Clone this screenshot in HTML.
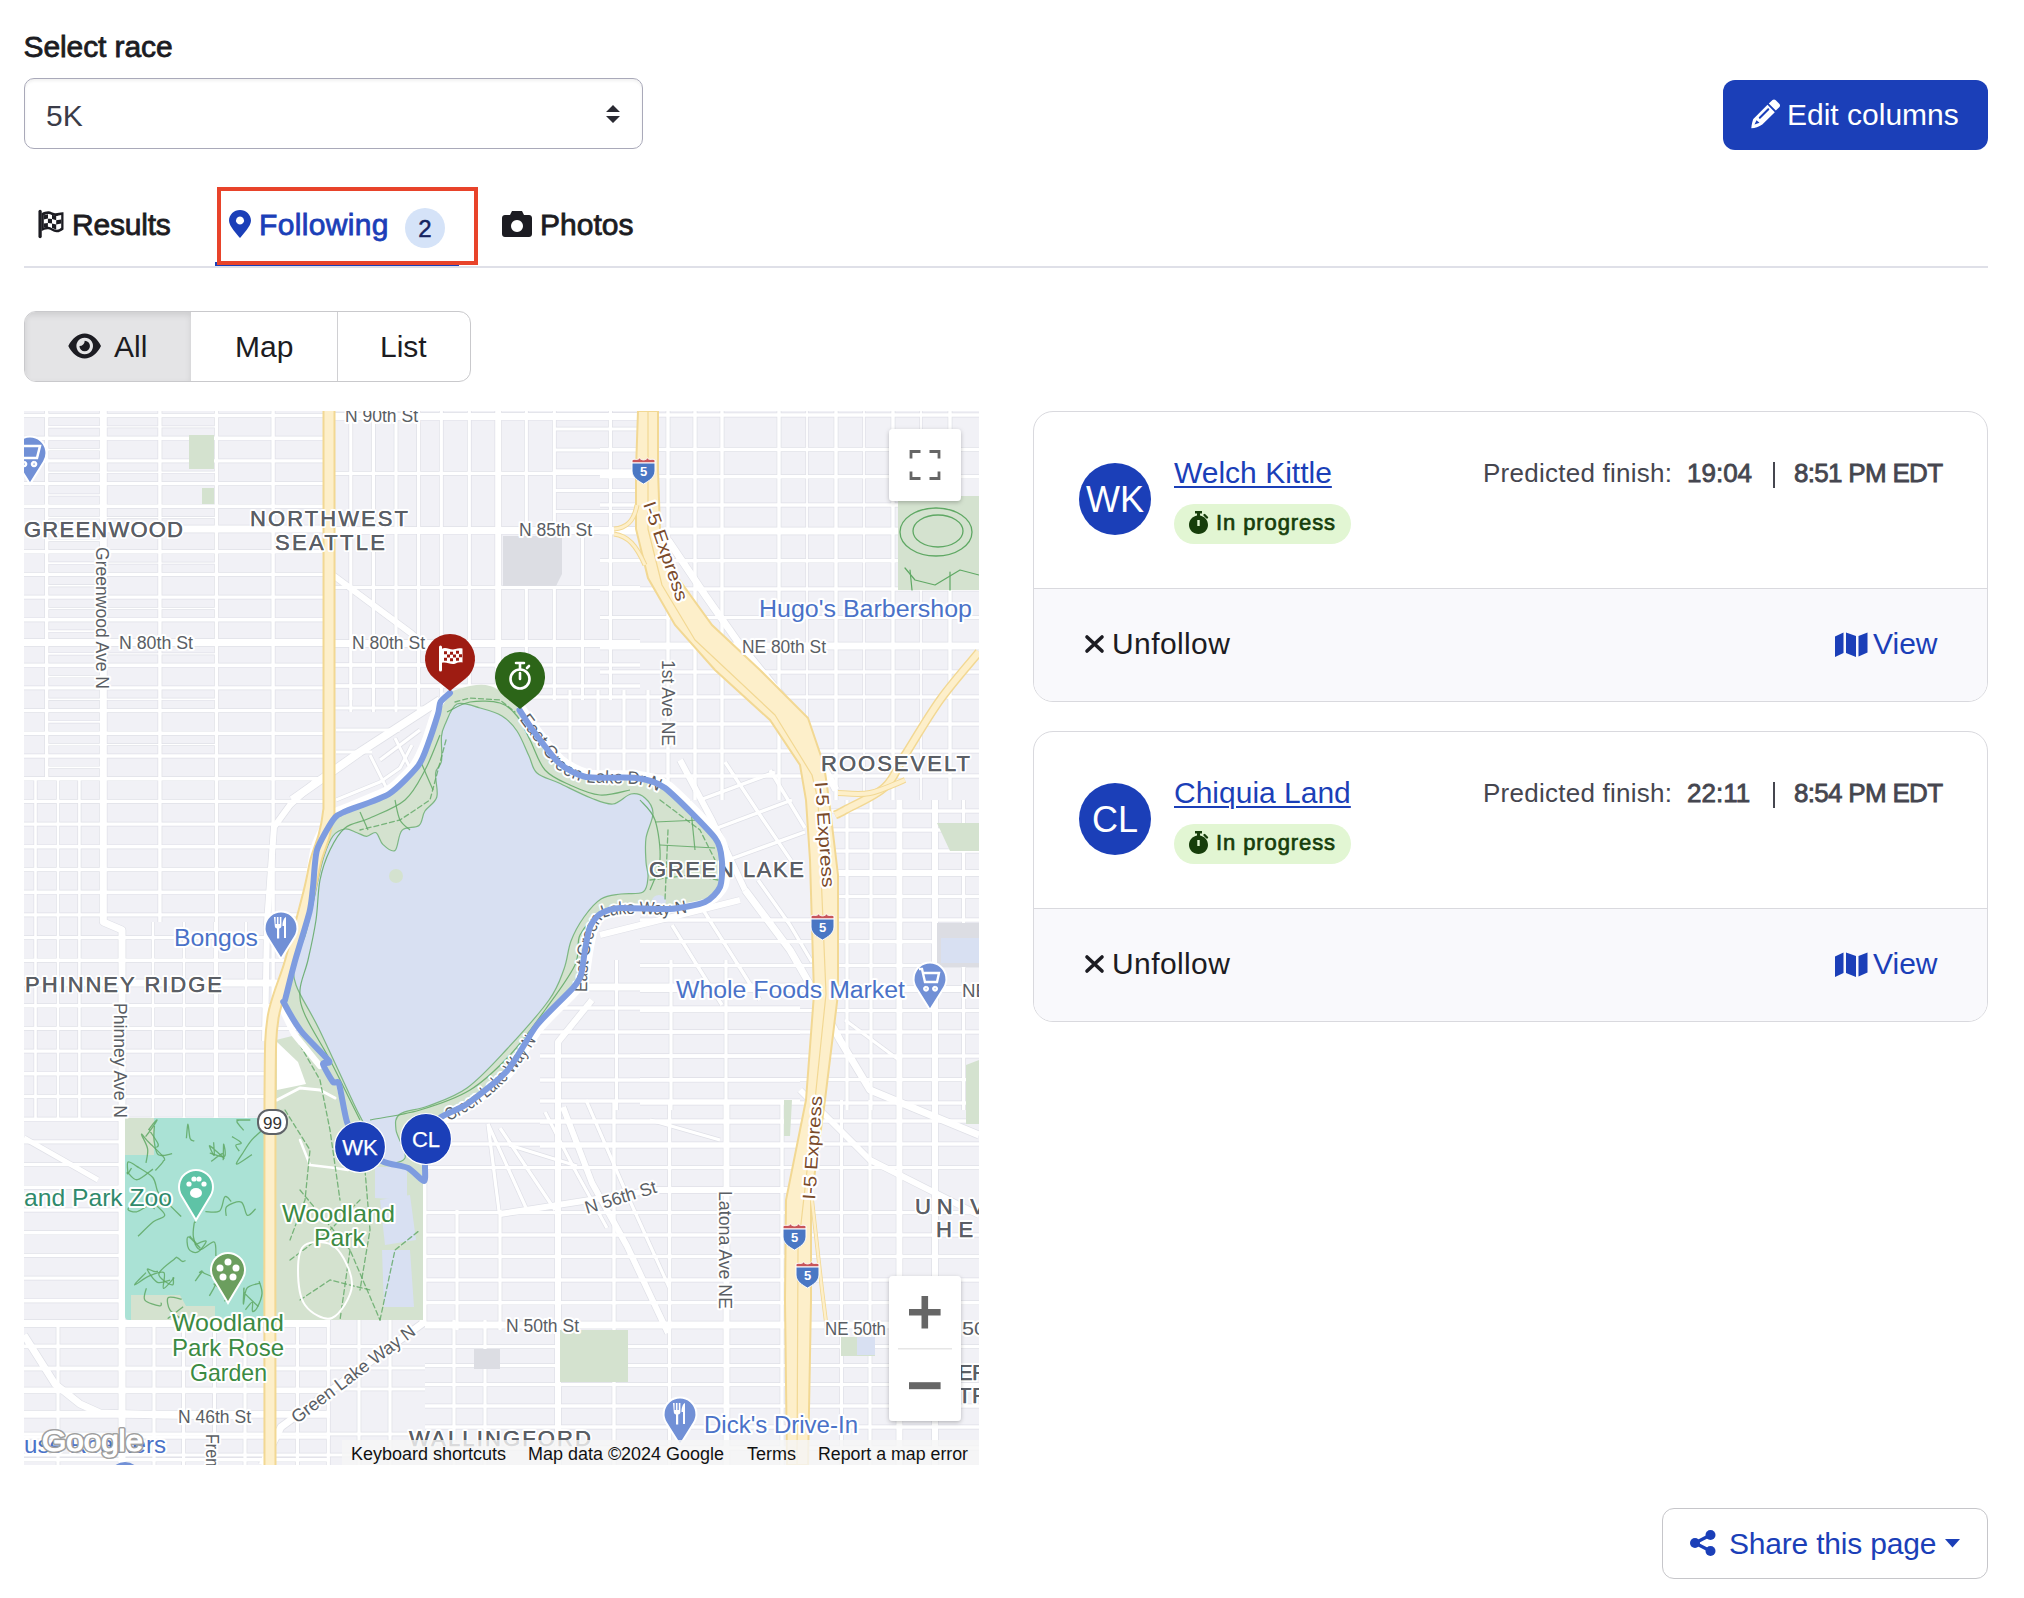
<!DOCTYPE html>
<html><head><meta charset="utf-8">
<style>
html,body{margin:0;padding:0;background:#fff;width:2024px;height:1598px;overflow:hidden;position:relative;font-family:"Liberation Sans",sans-serif;color:#212529}
.a{position:absolute;white-space:nowrap;line-height:1}
.b{font-weight:400;-webkit-text-stroke:0.8px currentColor}
.blue{color:#1b3fb8}
svg.i{position:absolute;display:block;overflow:visible}
</style></head><body>

<!-- Select race -->
<div class="a b" style="left:23.5px;top:31.6px;font-size:30px;letter-spacing:-0.1px;color:#1c1c22">Select race</div>
<div class="a" style="left:24px;top:78px;width:617px;height:69px;border:1.5px solid #a9a9b9;border-radius:10px;box-shadow:inset 0 2px 3px rgba(0,0,0,0.06)"></div>
<div class="a" style="left:46px;top:101.3px;font-size:30px;color:#3b3c48">5K</div>
<svg class="i" style="left:606px;top:105px" width="14" height="18" viewBox="0 0 14 18"><path d="M7 0 L14 7 L0 7 Z M0 11 L14 11 L7 18 Z" fill="#2a2a32"/></svg>

<!-- Edit columns -->
<div class="a" style="left:1723px;top:80px;width:265px;height:70px;background:#1b3fb8;border-radius:12px"></div>
<svg class="i" style="left:0;top:0" width="2024" height="200" viewBox="0 0 2024 200"><path d="M1767.5,104.8 L1774.8,112.3 L1762.3,124.5 C1759,127 1755,128 1751.3,128.3 C1751.6,124.5 1752.5,121 1753.3,119 Z M1768.8,103.5 L1772.5,100 C1773.5,99.3 1774.5,99.3 1775.5,100 L1779.5,104 C1780.2,105 1780.2,106 1779.5,107 L1775.8,110.5 Z" fill="#fff"/><path d="M1768.3,109.3 L1759.8,117.8" stroke="#1b3fb8" stroke-width="2" stroke-linecap="round"/><path d="M1756.5,120.3 L1759.5,122.8 L1754.5,124.5 Z" fill="#1b3fb8"/></svg>
<div class="a" style="left:1787px;top:100.1px;font-size:30px;color:#fff">Edit columns</div>

<!-- Tabs -->
<svg class="i" style="left:0;top:0" width="2024" height="300" viewBox="0 0 2024 300">
 <path d="M40.1,211.5 V236.5" stroke="#1c1c22" stroke-width="3.3" stroke-linecap="round"/>
 <path d="M41.5,213.2 C44,212 46,211.3 48.3,211.3 C51,211.3 52.5,213 55,213.2 C58,213.4 60,212 63.5,212.3 V229.5 C60.5,231.5 59,232.5 56.5,232.3 C53,232 51,229.5 48.3,229.3 C45.5,229.1 43.5,230.3 41.5,231 Z" fill="#1c1c22"/>
 <path d="M43.8,215.3 C45.5,214.5 47,214 48.3,214 C51,214 52.5,215.7 55,216 C57.5,216.2 59.5,215.3 61.2,215 V227.8 C59.7,229.2 58.3,229.8 56.5,229.7 C53,229.5 51,227 48.3,226.8 C46.5,226.6 45,227.2 43.8,227.8 Z" fill="#fff"/>
 <path d="M43.8,215.3 L48,214.3 L48,218.6 L43.8,219.6 Z M52,214.8 L56.2,216.1 L56.2,220.3 L52,219.1 Z M47.9,218.6 L52,219.1 L52,223.4 L47.9,222.9 Z M56.2,220.3 L61.2,219.4 L61.2,223.6 L56.2,224.5 Z M43.8,223.6 L47.9,222.9 L47.9,227 L43.8,227.8 Z M52,223.4 L56.2,224.5 L56.2,229.5 L52,228 Z" fill="#1c1c22"/>
</svg>
<div class="a b" style="left:72px;top:210px;font-size:30px;letter-spacing:-0.2px;color:#1c1c22">Results</div>

<svg class="i" style="left:229px;top:210px" width="22" height="28" viewBox="0 0 22 28"><path d="M11 0 C17 0,22 4.7,22 10.7 C22 16,14 24,11 28 C8 24,0 16,0 10.7 C0 4.7,5 0,11 0 Z M11 6.5 A4 4 0 1 0 11.01 6.5 Z" fill="#1b3fb8" fill-rule="evenodd"/></svg>
<div class="a b blue" style="left:259px;top:210px;font-size:30px;letter-spacing:0.35px">Following</div>
<div class="a" style="left:405px;top:208px;width:40px;height:40px;border-radius:50%;background:#d5e3f8"></div>
<div class="a" style="left:405px;top:214px;width:40px;text-align:center;font-size:24px;line-height:30px;color:#16235e;-webkit-text-stroke:0.5px #16235e">2</div>

<svg class="i" style="left:502px;top:211px" width="30" height="26" viewBox="0 0 30 26"><path d="M10 0 H20 L22 4 H27 C28.7 4,30 5.3,30 7 V23 C30 24.7,28.7 26,27 26 H3 C1.3 26,0 24.7,0 23 V7 C0 5.3,1.3 4,3 4 H8 Z M15 9 A6 6 0 1 0 15.01 9 Z" fill="#1c1c22" fill-rule="evenodd"/></svg>
<div class="a b" style="left:540px;top:210px;font-size:30px;letter-spacing:0px;color:#1c1c22">Photos</div>

<div class="a" style="left:24px;top:266px;width:1964px;height:2px;background:#dfe0e8"></div>
<div class="a" style="left:215px;top:262px;width:244px;height:4px;background:#1b3fb8"></div>
<div class="a" style="left:217px;top:187px;width:253px;height:70px;border:4px solid #e8432a"></div>

<!-- Button group -->
<div class="a" style="left:24px;top:311px;width:444.5px;height:68.5px;border:1.3px solid #c9c9cc;border-radius:12px;overflow:hidden">
  <div class="a" style="left:0;top:0;width:166px;height:68.5px;background:#e4e4e6;box-shadow:inset 0 3px 6px rgba(0,0,0,0.10)"></div>
  <div class="a" style="left:311.5px;top:0;width:1.3px;height:68.5px;background:#d0d0d3"></div>
</div>
<svg class="i" style="left:0;top:0" width="300" height="400" viewBox="0 0 300 400"><path d="M68.3,346 C72,338.5 78,333.5 84.7,333.5 C91.4,333.5 97.4,338.5 101,346 C97.4,353.5 91.4,358.5 84.7,358.5 C78,358.5 72,353.5 68.3,346 Z M84.7,337.7 A8.3,8.3 0 1 0 84.71,337.7 Z" fill="#1c1c22" fill-rule="evenodd"/><path d="M84.7,340.75 A5.25,5.25 0 1 1 79.45,346 A5.2,5.2 0 0 0 84.7,340.75 Z" fill="#1c1c22"/></svg>
<div class="a" style="left:114px;top:331.6px;font-size:30px;color:#1c1c22">All</div>
<div class="a" style="left:235px;top:331.6px;font-size:30px;color:#1c1c22">Map</div>
<div class="a" style="left:380px;top:331.6px;font-size:30px;color:#1c1c22">List</div>

<!-- MAP -->
<div id="map" class="a" style="left:24px;top:411px;width:955px;height:1054px;background:#eeeff3;overflow:hidden">
<svg width="955" height="1054" viewBox="24 411 955 1054" style="position:absolute;left:0;top:0;display:block"><rect x="24" y="411" width="955" height="1054" fill="#f1f1f6"/>
<g fill="none" stroke-linecap="butt" stroke-linejoin="round">
<polyline points="24.0,415.5 330.0,415.5" stroke="#dfe0e7" stroke-width="4.8"/>
<polyline points="24.0,438.2 330.0,438.2" stroke="#dfe0e7" stroke-width="4.8"/>
<polyline points="24.0,460.9 330.0,460.9" stroke="#dfe0e7" stroke-width="4.8"/>
<polyline points="24.0,483.6 330.0,483.6" stroke="#dfe0e7" stroke-width="4.8"/>
<polyline points="24.0,506.3 330.0,506.3" stroke="#dfe0e7" stroke-width="4.8"/>
<polyline points="24.0,529.0 330.0,529.0" stroke="#dfe0e7" stroke-width="8.4"/>
<polyline points="24.0,551.7 330.0,551.7" stroke="#dfe0e7" stroke-width="4.8"/>
<polyline points="24.0,574.4 330.0,574.4" stroke="#dfe0e7" stroke-width="4.8"/>
<polyline points="24.0,597.1 330.0,597.1" stroke="#dfe0e7" stroke-width="4.8"/>
<polyline points="24.0,619.8 330.0,619.8" stroke="#dfe0e7" stroke-width="4.8"/>
<polyline points="24.0,642.5 330.0,642.5" stroke="#dfe0e7" stroke-width="8.4"/>
<polyline points="24.0,665.2 330.0,665.2" stroke="#dfe0e7" stroke-width="4.8"/>
<polyline points="24.0,687.9 330.0,687.9" stroke="#dfe0e7" stroke-width="4.8"/>
<polyline points="24.0,710.6 330.0,710.6" stroke="#dfe0e7" stroke-width="4.8"/>
<polyline points="24.0,733.3 330.0,733.3" stroke="#dfe0e7" stroke-width="4.8"/>
<polyline points="24.0,756.0 330.0,756.0" stroke="#dfe0e7" stroke-width="4.8"/>
<polyline points="24.0,778.7 330.0,778.7" stroke="#dfe0e7" stroke-width="4.8"/>
<polyline points="24.0,801.4 330.0,801.4" stroke="#dfe0e7" stroke-width="4.8"/>
<polyline points="24.0,824.1 330.0,824.1" stroke="#dfe0e7" stroke-width="4.8"/>
<polyline points="24.0,846.8 330.0,846.8" stroke="#dfe0e7" stroke-width="4.8"/>
<polyline points="24.0,869.5 330.0,869.5" stroke="#dfe0e7" stroke-width="4.8"/>
<polyline points="24.0,892.2 330.0,892.2" stroke="#dfe0e7" stroke-width="4.8"/>
<polyline points="24.0,914.9 330.0,914.9" stroke="#dfe0e7" stroke-width="4.8"/>
<polyline points="24.0,937.6 330.0,937.6" stroke="#dfe0e7" stroke-width="4.8"/>
<polyline points="24.0,960.3 330.0,960.3" stroke="#dfe0e7" stroke-width="4.8"/>
<polyline points="24.0,983.0 330.0,983.0" stroke="#dfe0e7" stroke-width="8.4"/>
<polyline points="24.0,1005.7 330.0,1005.7" stroke="#dfe0e7" stroke-width="4.8"/>
<polyline points="24.0,1028.4 330.0,1028.4" stroke="#dfe0e7" stroke-width="4.8"/>
<polyline points="24.0,1051.1 330.0,1051.1" stroke="#dfe0e7" stroke-width="4.8"/>
<polyline points="24.0,1073.8 330.0,1073.8" stroke="#dfe0e7" stroke-width="4.8"/>
<polyline points="24.0,1096.5 330.0,1096.5" stroke="#dfe0e7" stroke-width="4.8"/>
<polyline points="24.0,1119.2 330.0,1119.2" stroke="#dfe0e7" stroke-width="4.8"/>
<polyline points="24.0,1141.9 330.0,1141.9" stroke="#dfe0e7" stroke-width="4.8"/>
<polyline points="24.0,1164.6 330.0,1164.6" stroke="#dfe0e7" stroke-width="4.8"/>
<polyline points="24.0,1187.3 330.0,1187.3" stroke="#dfe0e7" stroke-width="4.8"/>
<polyline points="24.0,1210.0 330.0,1210.0" stroke="#dfe0e7" stroke-width="4.8"/>
<polyline points="24.0,1232.7 330.0,1232.7" stroke="#dfe0e7" stroke-width="4.8"/>
<polyline points="24.0,1255.4 330.0,1255.4" stroke="#dfe0e7" stroke-width="4.8"/>
<polyline points="24.0,1278.1 330.0,1278.1" stroke="#dfe0e7" stroke-width="4.8"/>
<polyline points="24.0,1300.8 330.0,1300.8" stroke="#dfe0e7" stroke-width="4.8"/>
<polyline points="24.0,1323.5 330.0,1323.5" stroke="#dfe0e7" stroke-width="8.4"/>
<polyline points="24.0,1346.2 330.0,1346.2" stroke="#dfe0e7" stroke-width="4.8"/>
<polyline points="24.0,1368.9 330.0,1368.9" stroke="#dfe0e7" stroke-width="4.8"/>
<polyline points="24.0,1391.6 330.0,1391.6" stroke="#dfe0e7" stroke-width="4.8"/>
<polyline points="24.0,1414.3 330.0,1414.3" stroke="#dfe0e7" stroke-width="8.4"/>
<polyline points="24.0,1437.0 330.0,1437.0" stroke="#dfe0e7" stroke-width="4.8"/>
<polyline points="24.0,1459.7 330.0,1459.7" stroke="#dfe0e7" stroke-width="4.8"/>
<polyline points="46.7,411.0 46.7,780.0" stroke="#dfe0e7" stroke-width="4.8"/>
<polyline points="159.9,411.0 159.9,922.0" stroke="#dfe0e7" stroke-width="4.8"/>
<polyline points="216.5,411.0 216.5,1118.0" stroke="#dfe0e7" stroke-width="4.8"/>
<polyline points="273.1,411.0 273.1,1118.0" stroke="#dfe0e7" stroke-width="4.8"/>
<polyline points="103.3,411.0 103.3,922.0 122.0,930.0 122.0,1465.0" stroke="#dfe0e7" stroke-width="8.4"/>
<polyline points="35.5,780.0 35.5,1118.0" stroke="#dfe0e7" stroke-width="4.0"/>
<polyline points="58.0,780.0 58.0,1118.0" stroke="#dfe0e7" stroke-width="4.0"/>
<polyline points="79.4,780.0 79.4,1118.0" stroke="#dfe0e7" stroke-width="4.0"/>
<polyline points="153.0,922.0 153.0,1118.0" stroke="#dfe0e7" stroke-width="4.0"/>
<polyline points="184.0,922.0 184.0,1118.0" stroke="#dfe0e7" stroke-width="4.0"/>
<polyline points="215.0,922.0 215.0,1118.0" stroke="#dfe0e7" stroke-width="4.0"/>
<polyline points="246.0,922.0 246.0,1118.0" stroke="#dfe0e7" stroke-width="4.0"/>
<polyline points="58.0,1320.0 58.0,1465.0" stroke="#dfe0e7" stroke-width="4.6"/>
<polyline points="154.0,1320.0 154.0,1465.0" stroke="#dfe0e7" stroke-width="4.6"/>
<polyline points="183.6,1320.0 183.6,1465.0" stroke="#dfe0e7" stroke-width="4.6"/>
<polyline points="214.5,1320.0 214.5,1465.0" stroke="#dfe0e7" stroke-width="4.6"/>
<polyline points="245.0,1320.0 245.0,1465.0" stroke="#dfe0e7" stroke-width="4.6"/>
<polyline points="46.7,426.9 103.3,426.9" stroke="#dfe0e7" stroke-width="3.0"/>
<polyline points="46.7,449.6 103.3,449.6" stroke="#dfe0e7" stroke-width="3.0"/>
<polyline points="46.7,472.2 103.3,472.2" stroke="#dfe0e7" stroke-width="3.0"/>
<polyline points="46.7,495.0 103.3,495.0" stroke="#dfe0e7" stroke-width="3.0"/>
<polyline points="46.7,517.6 103.3,517.6" stroke="#dfe0e7" stroke-width="3.0"/>
<polyline points="46.7,540.4 103.3,540.4" stroke="#dfe0e7" stroke-width="3.0"/>
<polyline points="46.7,563.1 103.3,563.1" stroke="#dfe0e7" stroke-width="3.0"/>
<polyline points="46.7,585.8 103.3,585.8" stroke="#dfe0e7" stroke-width="3.0"/>
<polyline points="46.7,608.5 103.3,608.5" stroke="#dfe0e7" stroke-width="3.0"/>
<polyline points="46.7,631.1 103.3,631.1" stroke="#dfe0e7" stroke-width="3.0"/>
<polyline points="46.7,653.9 103.3,653.9" stroke="#dfe0e7" stroke-width="3.0"/>
<polyline points="46.7,676.6 103.3,676.6" stroke="#dfe0e7" stroke-width="3.0"/>
<polyline points="46.7,699.2 103.3,699.2" stroke="#dfe0e7" stroke-width="3.0"/>
<polyline points="46.7,721.9 103.3,721.9" stroke="#dfe0e7" stroke-width="3.0"/>
<polyline points="46.7,744.6 103.3,744.6" stroke="#dfe0e7" stroke-width="3.0"/>
<polyline points="46.7,767.4 103.3,767.4" stroke="#dfe0e7" stroke-width="3.0"/>
<polyline points="103.3,426.9 216.5,426.9" stroke="#dfe0e7" stroke-width="2.8"/>
<polyline points="103.3,472.2 216.5,472.2" stroke="#dfe0e7" stroke-width="2.8"/>
<polyline points="103.3,517.6 216.5,517.6" stroke="#dfe0e7" stroke-width="2.8"/>
<polyline points="103.3,563.1 216.5,563.1" stroke="#dfe0e7" stroke-width="2.8"/>
<polyline points="103.3,608.5 216.5,608.5" stroke="#dfe0e7" stroke-width="2.8"/>
<polyline points="103.3,653.9 216.5,653.9" stroke="#dfe0e7" stroke-width="2.8"/>
<polyline points="103.3,699.2 216.5,699.2" stroke="#dfe0e7" stroke-width="2.8"/>
<polyline points="103.3,744.6 216.5,744.6" stroke="#dfe0e7" stroke-width="2.8"/>
<polyline points="330.0,416.4 640.0,416.4" stroke="#dfe0e7" stroke-width="8.4"/>
<polyline points="330.0,473.4 640.0,473.4" stroke="#dfe0e7" stroke-width="4.8"/>
<polyline points="330.0,530.4 640.0,530.4" stroke="#dfe0e7" stroke-width="8.4"/>
<polyline points="330.0,587.4 640.0,587.4" stroke="#dfe0e7" stroke-width="4.8"/>
<polyline points="330.0,643.5 640.0,643.5" stroke="#dfe0e7" stroke-width="8.4"/>
<polyline points="330.0,665.0 640.0,665.0" stroke="#dfe0e7" stroke-width="4.8"/>
<polyline points="330.0,686.0 640.0,686.0" stroke="#dfe0e7" stroke-width="4.8"/>
<polyline points="350.8,411.0 350.8,700.0" stroke="#dfe0e7" stroke-width="4.6"/>
<polyline points="373.4,411.0 373.4,700.0" stroke="#dfe0e7" stroke-width="4.6"/>
<polyline points="396.0,411.0 396.0,700.0" stroke="#dfe0e7" stroke-width="4.6"/>
<polyline points="418.6,411.0 418.6,700.0" stroke="#dfe0e7" stroke-width="4.6"/>
<polyline points="441.3,411.0 441.3,700.0" stroke="#dfe0e7" stroke-width="4.6"/>
<polyline points="469.3,411.0 469.3,700.0" stroke="#dfe0e7" stroke-width="4.6"/>
<polyline points="526.3,411.0 526.3,700.0" stroke="#dfe0e7" stroke-width="4.6"/>
<polyline points="554.3,411.0 554.3,700.0" stroke="#dfe0e7" stroke-width="4.6"/>
<polyline points="610.4,411.0 610.4,700.0" stroke="#dfe0e7" stroke-width="4.6"/>
<polyline points="582.4,530.0 582.4,700.0" stroke="#dfe0e7" stroke-width="4.6"/>
<polyline points="498.2,411.0 498.2,700.0" stroke="#dfe0e7" stroke-width="7.4"/>
<polyline points="554.0,429.0 640.0,429.0" stroke="#dfe0e7" stroke-width="4.4"/>
<polyline points="554.0,450.0 640.0,450.0" stroke="#dfe0e7" stroke-width="4.4"/>
<polyline points="554.0,470.7 640.0,470.7" stroke="#dfe0e7" stroke-width="4.4"/>
<polyline points="554.0,490.6 640.0,490.6" stroke="#dfe0e7" stroke-width="4.4"/>
<polyline points="554.0,511.4 640.0,511.4" stroke="#dfe0e7" stroke-width="4.4"/>
<polyline points="335.0,665.0 440.0,665.0" stroke="#dfe0e7" stroke-width="4.6"/>
<polyline points="335.0,686.0 440.0,686.0" stroke="#dfe0e7" stroke-width="4.6"/>
<polyline points="335.0,708.0 440.0,708.0" stroke="#dfe0e7" stroke-width="4.6"/>
<polyline points="350.8,690.0 350.8,712.0" stroke="#dfe0e7" stroke-width="4.4"/>
<polyline points="373.4,690.0 373.4,712.0" stroke="#dfe0e7" stroke-width="4.4"/>
<polyline points="396.0,690.0 396.0,712.0" stroke="#dfe0e7" stroke-width="4.4"/>
<polyline points="418.6,690.0 418.6,712.0" stroke="#dfe0e7" stroke-width="4.4"/>
<polyline points="336.0,730.0 400.0,730.0" stroke="#dfe0e7" stroke-width="4.4"/>
<polyline points="336.0,752.0 372.0,752.0" stroke="#dfe0e7" stroke-width="4.4"/>
<polyline points="336.0,800.0 380.0,782.0 400.0,768.0 412.0,745.0" stroke="#dfe0e7" stroke-width="4.4"/>
<polyline points="337.0,823.0 385.0,801.0 410.0,786.0 423.0,760.0" stroke="#dfe0e7" stroke-width="4.4"/>
<polyline points="370.0,755.0 390.0,795.0" stroke="#dfe0e7" stroke-width="4.4"/>
<polyline points="395.0,738.0 410.0,768.0" stroke="#dfe0e7" stroke-width="4.4"/>
<polyline points="600.0,415.0 979.0,415.0" stroke="#dfe0e7" stroke-width="4.8"/>
<polyline points="600.0,449.5 979.0,449.5" stroke="#dfe0e7" stroke-width="4.8"/>
<polyline points="600.0,476.7 979.0,476.7" stroke="#dfe0e7" stroke-width="4.8"/>
<polyline points="600.0,505.0 979.0,505.0" stroke="#dfe0e7" stroke-width="4.8"/>
<polyline points="600.0,531.0 979.0,531.0" stroke="#dfe0e7" stroke-width="8.4"/>
<polyline points="600.0,560.7 979.0,560.7" stroke="#dfe0e7" stroke-width="4.8"/>
<polyline points="600.0,589.0 979.0,589.0" stroke="#dfe0e7" stroke-width="4.8"/>
<polyline points="600.0,617.6 979.0,617.6" stroke="#dfe0e7" stroke-width="4.8"/>
<polyline points="600.0,646.0 979.0,646.0" stroke="#dfe0e7" stroke-width="8.4"/>
<polyline points="600.0,672.0 979.0,672.0" stroke="#dfe0e7" stroke-width="4.8"/>
<polyline points="530.0,697.0 979.0,697.0" stroke="#dfe0e7" stroke-width="4.8"/>
<polyline points="530.0,724.0 979.0,724.0" stroke="#dfe0e7" stroke-width="4.8"/>
<polyline points="530.0,751.0 979.0,751.0" stroke="#dfe0e7" stroke-width="4.8"/>
<polyline points="530.0,776.0 979.0,776.0" stroke="#dfe0e7" stroke-width="4.8"/>
<polyline points="570.0,690.0 570.0,780.0" stroke="#dfe0e7" stroke-width="4.6"/>
<polyline points="598.0,690.0 598.0,780.0" stroke="#dfe0e7" stroke-width="4.6"/>
<polyline points="624.0,690.0 624.0,780.0" stroke="#dfe0e7" stroke-width="4.6"/>
<polyline points="648.0,690.0 648.0,780.0" stroke="#dfe0e7" stroke-width="4.6"/>
<polyline points="668.0,411.0 668.0,800.0" stroke="#dfe0e7" stroke-width="4.8"/>
<polyline points="695.0,411.0 695.0,800.0" stroke="#dfe0e7" stroke-width="4.8"/>
<polyline points="722.0,411.0 722.0,800.0" stroke="#dfe0e7" stroke-width="4.8"/>
<polyline points="779.0,411.0 779.0,800.0" stroke="#dfe0e7" stroke-width="4.8"/>
<polyline points="836.0,411.0 836.0,800.0" stroke="#dfe0e7" stroke-width="4.8"/>
<polyline points="893.0,411.0 893.0,800.0" stroke="#dfe0e7" stroke-width="4.8"/>
<polyline points="950.0,411.0 950.0,800.0" stroke="#dfe0e7" stroke-width="4.8"/>
<polyline points="807.0,411.0 807.0,800.0" stroke="#dfe0e7" stroke-width="3.2"/>
<polyline points="864.0,411.0 864.0,800.0" stroke="#dfe0e7" stroke-width="3.2"/>
<polyline points="921.0,411.0 921.0,800.0" stroke="#dfe0e7" stroke-width="3.2"/>
<polyline points="810.0,811.0 979.0,811.0" stroke="#dfe0e7" stroke-width="4.8"/>
<polyline points="810.0,830.0 979.0,830.0" stroke="#dfe0e7" stroke-width="4.8"/>
<polyline points="810.0,851.0 979.0,851.0" stroke="#dfe0e7" stroke-width="4.8"/>
<polyline points="810.0,873.0 979.0,873.0" stroke="#dfe0e7" stroke-width="7.4"/>
<polyline points="810.0,896.5 979.0,896.5" stroke="#dfe0e7" stroke-width="4.8"/>
<polyline points="640.0,920.0 979.0,920.0" stroke="#dfe0e7" stroke-width="4.8"/>
<polyline points="640.0,941.7 979.0,941.7" stroke="#dfe0e7" stroke-width="4.8"/>
<polyline points="640.0,965.5 979.0,965.5" stroke="#dfe0e7" stroke-width="4.8"/>
<polyline points="640.0,989.0 979.0,989.0" stroke="#dfe0e7" stroke-width="7.4"/>
<polyline points="640.0,1010.6 979.0,1010.6" stroke="#dfe0e7" stroke-width="4.8"/>
<polyline points="640.0,1032.0 979.0,1032.0" stroke="#dfe0e7" stroke-width="4.8"/>
<polyline points="640.0,1056.0 979.0,1056.0" stroke="#dfe0e7" stroke-width="4.8"/>
<polyline points="640.0,1079.6 979.0,1079.6" stroke="#dfe0e7" stroke-width="4.8"/>
<polyline points="640.0,1103.0 979.0,1103.0" stroke="#dfe0e7" stroke-width="4.8"/>
<polyline points="680.0,760.0 712.0,820.0 745.0,890.0" stroke="#dfe0e7" stroke-width="7.4"/>
<polyline points="725.0,762.0 760.0,815.0 792.0,862.0" stroke="#dfe0e7" stroke-width="4.8"/>
<polyline points="770.0,770.0 805.0,828.0" stroke="#dfe0e7" stroke-width="4.8"/>
<polyline points="700.0,800.0 775.0,772.0" stroke="#dfe0e7" stroke-width="4.8"/>
<polyline points="712.0,830.0 792.0,800.0" stroke="#dfe0e7" stroke-width="4.8"/>
<polyline points="728.0,860.0 805.0,832.0" stroke="#dfe0e7" stroke-width="4.8"/>
<polyline points="700.0,905.0 735.0,960.0 760.0,1000.0" stroke="#dfe0e7" stroke-width="4.8"/>
<polyline points="672.0,925.0 700.0,970.0 722.0,1005.0" stroke="#dfe0e7" stroke-width="4.8"/>
<polyline points="758.0,880.0 790.0,925.0 812.0,962.0" stroke="#dfe0e7" stroke-width="4.8"/>
<polyline points="847.0,800.0 847.0,1110.0" stroke="#dfe0e7" stroke-width="4.6"/>
<polyline points="871.0,800.0 871.0,1110.0" stroke="#dfe0e7" stroke-width="4.6"/>
<polyline points="963.6,800.0 963.6,1110.0" stroke="#dfe0e7" stroke-width="4.6"/>
<polyline points="899.4,800.0 899.4,1465.0" stroke="#dfe0e7" stroke-width="7.4"/>
<polyline points="935.0,800.0 935.0,1465.0" stroke="#dfe0e7" stroke-width="7.4"/>
<polyline points="540.0,987.0 800.0,987.0" stroke="#dfe0e7" stroke-width="8.4"/>
<polyline points="540.0,1008.0 800.0,1008.0" stroke="#dfe0e7" stroke-width="4.8"/>
<polyline points="540.0,1032.0 800.0,1032.0" stroke="#dfe0e7" stroke-width="4.8"/>
<polyline points="540.0,1056.0 800.0,1056.0" stroke="#dfe0e7" stroke-width="4.8"/>
<polyline points="540.0,1080.0 800.0,1080.0" stroke="#dfe0e7" stroke-width="4.8"/>
<polyline points="540.0,1101.0 800.0,1101.0" stroke="#dfe0e7" stroke-width="4.8"/>
<polyline points="540.0,1122.0 800.0,1122.0" stroke="#dfe0e7" stroke-width="4.8"/>
<polyline points="540.0,1146.0 800.0,1146.0" stroke="#dfe0e7" stroke-width="4.8"/>
<polyline points="616.5,960.0 616.5,1110.0" stroke="#dfe0e7" stroke-width="4.6"/>
<polyline points="671.0,960.0 671.0,1110.0" stroke="#dfe0e7" stroke-width="4.6"/>
<polyline points="726.0,960.0 726.0,1110.0" stroke="#dfe0e7" stroke-width="4.6"/>
<polyline points="425.0,1121.0 979.0,1121.0" stroke="#dfe0e7" stroke-width="4.8"/>
<polyline points="425.0,1144.0 979.0,1144.0" stroke="#dfe0e7" stroke-width="4.8"/>
<polyline points="425.0,1167.6 979.0,1167.6" stroke="#dfe0e7" stroke-width="4.8"/>
<polyline points="425.0,1212.6 979.0,1212.6" stroke="#dfe0e7" stroke-width="4.8"/>
<polyline points="425.0,1235.0 979.0,1235.0" stroke="#dfe0e7" stroke-width="4.8"/>
<polyline points="425.0,1256.5 979.0,1256.5" stroke="#dfe0e7" stroke-width="4.8"/>
<polyline points="425.0,1280.0 979.0,1280.0" stroke="#dfe0e7" stroke-width="4.8"/>
<polyline points="425.0,1302.7 979.0,1302.7" stroke="#dfe0e7" stroke-width="4.8"/>
<polyline points="425.0,1346.6 979.0,1346.6" stroke="#dfe0e7" stroke-width="4.8"/>
<polyline points="425.0,1365.6 979.0,1365.6" stroke="#dfe0e7" stroke-width="4.8"/>
<polyline points="425.0,1384.6 979.0,1384.6" stroke="#dfe0e7" stroke-width="4.8"/>
<polyline points="425.0,1406.0 979.0,1406.0" stroke="#dfe0e7" stroke-width="4.8"/>
<polyline points="425.0,1427.0 979.0,1427.0" stroke="#dfe0e7" stroke-width="4.8"/>
<polyline points="425.0,1448.0 979.0,1448.0" stroke="#dfe0e7" stroke-width="4.8"/>
<polyline points="425.0,1325.0 979.0,1325.0" stroke="#dfe0e7" stroke-width="8.4"/>
<polyline points="614.0,1100.0 614.0,1465.0" stroke="#dfe0e7" stroke-width="4.8"/>
<polyline points="669.6,1100.0 669.6,1465.0" stroke="#dfe0e7" stroke-width="4.8"/>
<polyline points="782.0,1100.0 782.0,1465.0" stroke="#dfe0e7" stroke-width="4.8"/>
<polyline points="726.5,1100.0 726.5,1465.0" stroke="#dfe0e7" stroke-width="7.4"/>
<polyline points="841.5,1100.0 841.5,1465.0" stroke="#dfe0e7" stroke-width="4.6"/>
<polyline points="870.0,1100.0 870.0,1465.0" stroke="#dfe0e7" stroke-width="4.6"/>
<polyline points="500.0,1214.0 654.0,1190.0 800.0,1190.0" stroke="#dfe0e7" stroke-width="7.4"/>
<polyline points="24.0,1346.6 425.0,1346.6" stroke="#dfe0e7" stroke-width="4.6"/>
<polyline points="24.0,1368.0 425.0,1368.0" stroke="#dfe0e7" stroke-width="4.6"/>
<polyline points="24.0,1389.0 425.0,1389.0" stroke="#dfe0e7" stroke-width="4.6"/>
<polyline points="24.0,1434.0 425.0,1434.0" stroke="#dfe0e7" stroke-width="4.6"/>
<polyline points="24.0,1455.0 425.0,1455.0" stroke="#dfe0e7" stroke-width="4.6"/>
<polyline points="297.4,1320.0 297.4,1465.0" stroke="#dfe0e7" stroke-width="4.6"/>
<polyline points="328.3,1320.0 328.3,1465.0" stroke="#dfe0e7" stroke-width="4.6"/>
<polyline points="359.0,1320.0 359.0,1465.0" stroke="#dfe0e7" stroke-width="4.6"/>
<polyline points="390.0,1320.0 390.0,1465.0" stroke="#dfe0e7" stroke-width="4.6"/>
<polyline points="454.0,1320.0 454.0,1465.0" stroke="#dfe0e7" stroke-width="4.6"/>
<polyline points="485.0,1320.0 485.0,1465.0" stroke="#dfe0e7" stroke-width="4.6"/>
<polyline points="423.0,1100.0 423.0,1323.0 281.0,1427.0 262.0,1465.0" stroke="#dfe0e7" stroke-width="8.4"/>
<polyline points="24.0,1335.0 55.0,1384.0 80.0,1404.0 100.0,1413.0 160.0,1415.0 250.0,1416.0" stroke="#dfe0e7" stroke-width="8.4"/>
<polyline points="24.0,1138.0 98.0,1180.0" stroke="#dfe0e7" stroke-width="6.4"/>
<polyline points="333.6,575.6 411.4,633.5 440.0,660.0" stroke="#dfe0e7" stroke-width="7.4"/>
<polyline points="292.0,800.0 360.0,752.0 440.0,700.0" stroke="#dfe0e7" stroke-width="9.4"/>
<polyline points="317.0,780.0 290.0,805.0 274.0,827.0 267.0,923.0 265.0,1041.0" stroke="#dfe0e7" stroke-width="7.4"/>
<polyline points="380.0,760.0 420.0,730.0" stroke="#dfe0e7" stroke-width="4.8"/>
<polyline points="668.0,540.0 705.0,595.0 738.0,642.0 795.0,712.0 836.0,790.0" stroke="#dfe0e7" stroke-width="8.4"/>
<polyline points="745.0,890.0 790.0,950.0 816.0,995.0 840.0,1040.0 870.0,1090.0 979.0,1135.0" stroke="#dfe0e7" stroke-width="8.4"/>
<polyline points="600.0,935.0 660.0,920.0 740.0,900.0" stroke="#dfe0e7" stroke-width="7.4"/>
<polyline points="592.0,1000.0 558.0,1042.0 558.0,1465.0" stroke="#dfe0e7" stroke-width="7.4"/>
<polyline points="563.0,1107.0 592.0,1183.0 627.0,1246.0 668.0,1333.0" stroke="#dfe0e7" stroke-width="7.4"/>
<polyline points="586.0,1100.0 625.0,1190.0 669.0,1287.0" stroke="#dfe0e7" stroke-width="4.6"/>
<polyline points="545.0,1112.0 575.0,1170.0 607.0,1228.0" stroke="#dfe0e7" stroke-width="4.6"/>
<polyline points="488.0,1124.0 499.0,1211.0" stroke="#dfe0e7" stroke-width="4.6"/>
<polyline points="488.0,1124.0 527.0,1210.0" stroke="#dfe0e7" stroke-width="4.6"/>
<polyline points="500.0,1128.0 555.0,1210.0" stroke="#dfe0e7" stroke-width="4.6"/>
<polyline points="509.0,1145.0 577.0,1166.0" stroke="#dfe0e7" stroke-width="4.6"/>
<polyline points="457.0,1210.0 457.0,1330.0" stroke="#dfe0e7" stroke-width="4.6"/>
<polyline points="500.0,1210.0 500.0,1330.0" stroke="#dfe0e7" stroke-width="4.6"/>
<polyline points="800.0,1090.0 870.0,1160.0 979.0,1215.0" stroke="#dfe0e7" stroke-width="7.4"/>
<polyline points="650.0,1120.0 720.0,1140.0" stroke="#dfe0e7" stroke-width="4.6"/>
<polyline points="845.0,1020.0 899.0,1060.0" stroke="#dfe0e7" stroke-width="4.6"/>
<polyline points="24.0,415.5 330.0,415.5" stroke="#ffffff" stroke-width="3.4"/>
<polyline points="24.0,438.2 330.0,438.2" stroke="#ffffff" stroke-width="3.4"/>
<polyline points="24.0,460.9 330.0,460.9" stroke="#ffffff" stroke-width="3.4"/>
<polyline points="24.0,483.6 330.0,483.6" stroke="#ffffff" stroke-width="3.4"/>
<polyline points="24.0,506.3 330.0,506.3" stroke="#ffffff" stroke-width="3.4"/>
<polyline points="24.0,529.0 330.0,529.0" stroke="#ffffff" stroke-width="7.0"/>
<polyline points="24.0,551.7 330.0,551.7" stroke="#ffffff" stroke-width="3.4"/>
<polyline points="24.0,574.4 330.0,574.4" stroke="#ffffff" stroke-width="3.4"/>
<polyline points="24.0,597.1 330.0,597.1" stroke="#ffffff" stroke-width="3.4"/>
<polyline points="24.0,619.8 330.0,619.8" stroke="#ffffff" stroke-width="3.4"/>
<polyline points="24.0,642.5 330.0,642.5" stroke="#ffffff" stroke-width="7.0"/>
<polyline points="24.0,665.2 330.0,665.2" stroke="#ffffff" stroke-width="3.4"/>
<polyline points="24.0,687.9 330.0,687.9" stroke="#ffffff" stroke-width="3.4"/>
<polyline points="24.0,710.6 330.0,710.6" stroke="#ffffff" stroke-width="3.4"/>
<polyline points="24.0,733.3 330.0,733.3" stroke="#ffffff" stroke-width="3.4"/>
<polyline points="24.0,756.0 330.0,756.0" stroke="#ffffff" stroke-width="3.4"/>
<polyline points="24.0,778.7 330.0,778.7" stroke="#ffffff" stroke-width="3.4"/>
<polyline points="24.0,801.4 330.0,801.4" stroke="#ffffff" stroke-width="3.4"/>
<polyline points="24.0,824.1 330.0,824.1" stroke="#ffffff" stroke-width="3.4"/>
<polyline points="24.0,846.8 330.0,846.8" stroke="#ffffff" stroke-width="3.4"/>
<polyline points="24.0,869.5 330.0,869.5" stroke="#ffffff" stroke-width="3.4"/>
<polyline points="24.0,892.2 330.0,892.2" stroke="#ffffff" stroke-width="3.4"/>
<polyline points="24.0,914.9 330.0,914.9" stroke="#ffffff" stroke-width="3.4"/>
<polyline points="24.0,937.6 330.0,937.6" stroke="#ffffff" stroke-width="3.4"/>
<polyline points="24.0,960.3 330.0,960.3" stroke="#ffffff" stroke-width="3.4"/>
<polyline points="24.0,983.0 330.0,983.0" stroke="#ffffff" stroke-width="7.0"/>
<polyline points="24.0,1005.7 330.0,1005.7" stroke="#ffffff" stroke-width="3.4"/>
<polyline points="24.0,1028.4 330.0,1028.4" stroke="#ffffff" stroke-width="3.4"/>
<polyline points="24.0,1051.1 330.0,1051.1" stroke="#ffffff" stroke-width="3.4"/>
<polyline points="24.0,1073.8 330.0,1073.8" stroke="#ffffff" stroke-width="3.4"/>
<polyline points="24.0,1096.5 330.0,1096.5" stroke="#ffffff" stroke-width="3.4"/>
<polyline points="24.0,1119.2 330.0,1119.2" stroke="#ffffff" stroke-width="3.4"/>
<polyline points="24.0,1141.9 330.0,1141.9" stroke="#ffffff" stroke-width="3.4"/>
<polyline points="24.0,1164.6 330.0,1164.6" stroke="#ffffff" stroke-width="3.4"/>
<polyline points="24.0,1187.3 330.0,1187.3" stroke="#ffffff" stroke-width="3.4"/>
<polyline points="24.0,1210.0 330.0,1210.0" stroke="#ffffff" stroke-width="3.4"/>
<polyline points="24.0,1232.7 330.0,1232.7" stroke="#ffffff" stroke-width="3.4"/>
<polyline points="24.0,1255.4 330.0,1255.4" stroke="#ffffff" stroke-width="3.4"/>
<polyline points="24.0,1278.1 330.0,1278.1" stroke="#ffffff" stroke-width="3.4"/>
<polyline points="24.0,1300.8 330.0,1300.8" stroke="#ffffff" stroke-width="3.4"/>
<polyline points="24.0,1323.5 330.0,1323.5" stroke="#ffffff" stroke-width="7.0"/>
<polyline points="24.0,1346.2 330.0,1346.2" stroke="#ffffff" stroke-width="3.4"/>
<polyline points="24.0,1368.9 330.0,1368.9" stroke="#ffffff" stroke-width="3.4"/>
<polyline points="24.0,1391.6 330.0,1391.6" stroke="#ffffff" stroke-width="3.4"/>
<polyline points="24.0,1414.3 330.0,1414.3" stroke="#ffffff" stroke-width="7.0"/>
<polyline points="24.0,1437.0 330.0,1437.0" stroke="#ffffff" stroke-width="3.4"/>
<polyline points="24.0,1459.7 330.0,1459.7" stroke="#ffffff" stroke-width="3.4"/>
<polyline points="46.7,411.0 46.7,780.0" stroke="#ffffff" stroke-width="3.4"/>
<polyline points="159.9,411.0 159.9,922.0" stroke="#ffffff" stroke-width="3.4"/>
<polyline points="216.5,411.0 216.5,1118.0" stroke="#ffffff" stroke-width="3.4"/>
<polyline points="273.1,411.0 273.1,1118.0" stroke="#ffffff" stroke-width="3.4"/>
<polyline points="103.3,411.0 103.3,922.0 122.0,930.0 122.0,1465.0" stroke="#ffffff" stroke-width="7.0"/>
<polyline points="35.5,780.0 35.5,1118.0" stroke="#ffffff" stroke-width="2.6"/>
<polyline points="58.0,780.0 58.0,1118.0" stroke="#ffffff" stroke-width="2.6"/>
<polyline points="79.4,780.0 79.4,1118.0" stroke="#ffffff" stroke-width="2.6"/>
<polyline points="153.0,922.0 153.0,1118.0" stroke="#ffffff" stroke-width="2.6"/>
<polyline points="184.0,922.0 184.0,1118.0" stroke="#ffffff" stroke-width="2.6"/>
<polyline points="215.0,922.0 215.0,1118.0" stroke="#ffffff" stroke-width="2.6"/>
<polyline points="246.0,922.0 246.0,1118.0" stroke="#ffffff" stroke-width="2.6"/>
<polyline points="58.0,1320.0 58.0,1465.0" stroke="#ffffff" stroke-width="3.2"/>
<polyline points="154.0,1320.0 154.0,1465.0" stroke="#ffffff" stroke-width="3.2"/>
<polyline points="183.6,1320.0 183.6,1465.0" stroke="#ffffff" stroke-width="3.2"/>
<polyline points="214.5,1320.0 214.5,1465.0" stroke="#ffffff" stroke-width="3.2"/>
<polyline points="245.0,1320.0 245.0,1465.0" stroke="#ffffff" stroke-width="3.2"/>
<polyline points="46.7,426.9 103.3,426.9" stroke="#ffffff" stroke-width="1.6"/>
<polyline points="46.7,449.6 103.3,449.6" stroke="#ffffff" stroke-width="1.6"/>
<polyline points="46.7,472.2 103.3,472.2" stroke="#ffffff" stroke-width="1.6"/>
<polyline points="46.7,495.0 103.3,495.0" stroke="#ffffff" stroke-width="1.6"/>
<polyline points="46.7,517.6 103.3,517.6" stroke="#ffffff" stroke-width="1.6"/>
<polyline points="46.7,540.4 103.3,540.4" stroke="#ffffff" stroke-width="1.6"/>
<polyline points="46.7,563.1 103.3,563.1" stroke="#ffffff" stroke-width="1.6"/>
<polyline points="46.7,585.8 103.3,585.8" stroke="#ffffff" stroke-width="1.6"/>
<polyline points="46.7,608.5 103.3,608.5" stroke="#ffffff" stroke-width="1.6"/>
<polyline points="46.7,631.1 103.3,631.1" stroke="#ffffff" stroke-width="1.6"/>
<polyline points="46.7,653.9 103.3,653.9" stroke="#ffffff" stroke-width="1.6"/>
<polyline points="46.7,676.6 103.3,676.6" stroke="#ffffff" stroke-width="1.6"/>
<polyline points="46.7,699.2 103.3,699.2" stroke="#ffffff" stroke-width="1.6"/>
<polyline points="46.7,721.9 103.3,721.9" stroke="#ffffff" stroke-width="1.6"/>
<polyline points="46.7,744.6 103.3,744.6" stroke="#ffffff" stroke-width="1.6"/>
<polyline points="46.7,767.4 103.3,767.4" stroke="#ffffff" stroke-width="1.6"/>
<polyline points="103.3,426.9 216.5,426.9" stroke="#ffffff" stroke-width="1.4"/>
<polyline points="103.3,472.2 216.5,472.2" stroke="#ffffff" stroke-width="1.4"/>
<polyline points="103.3,517.6 216.5,517.6" stroke="#ffffff" stroke-width="1.4"/>
<polyline points="103.3,563.1 216.5,563.1" stroke="#ffffff" stroke-width="1.4"/>
<polyline points="103.3,608.5 216.5,608.5" stroke="#ffffff" stroke-width="1.4"/>
<polyline points="103.3,653.9 216.5,653.9" stroke="#ffffff" stroke-width="1.4"/>
<polyline points="103.3,699.2 216.5,699.2" stroke="#ffffff" stroke-width="1.4"/>
<polyline points="103.3,744.6 216.5,744.6" stroke="#ffffff" stroke-width="1.4"/>
<polyline points="330.0,416.4 640.0,416.4" stroke="#ffffff" stroke-width="7.0"/>
<polyline points="330.0,473.4 640.0,473.4" stroke="#ffffff" stroke-width="3.4"/>
<polyline points="330.0,530.4 640.0,530.4" stroke="#ffffff" stroke-width="7.0"/>
<polyline points="330.0,587.4 640.0,587.4" stroke="#ffffff" stroke-width="3.4"/>
<polyline points="330.0,643.5 640.0,643.5" stroke="#ffffff" stroke-width="7.0"/>
<polyline points="330.0,665.0 640.0,665.0" stroke="#ffffff" stroke-width="3.4"/>
<polyline points="330.0,686.0 640.0,686.0" stroke="#ffffff" stroke-width="3.4"/>
<polyline points="350.8,411.0 350.8,700.0" stroke="#ffffff" stroke-width="3.2"/>
<polyline points="373.4,411.0 373.4,700.0" stroke="#ffffff" stroke-width="3.2"/>
<polyline points="396.0,411.0 396.0,700.0" stroke="#ffffff" stroke-width="3.2"/>
<polyline points="418.6,411.0 418.6,700.0" stroke="#ffffff" stroke-width="3.2"/>
<polyline points="441.3,411.0 441.3,700.0" stroke="#ffffff" stroke-width="3.2"/>
<polyline points="469.3,411.0 469.3,700.0" stroke="#ffffff" stroke-width="3.2"/>
<polyline points="526.3,411.0 526.3,700.0" stroke="#ffffff" stroke-width="3.2"/>
<polyline points="554.3,411.0 554.3,700.0" stroke="#ffffff" stroke-width="3.2"/>
<polyline points="610.4,411.0 610.4,700.0" stroke="#ffffff" stroke-width="3.2"/>
<polyline points="582.4,530.0 582.4,700.0" stroke="#ffffff" stroke-width="3.2"/>
<polyline points="498.2,411.0 498.2,700.0" stroke="#ffffff" stroke-width="6.0"/>
<polyline points="554.0,429.0 640.0,429.0" stroke="#ffffff" stroke-width="3.0"/>
<polyline points="554.0,450.0 640.0,450.0" stroke="#ffffff" stroke-width="3.0"/>
<polyline points="554.0,470.7 640.0,470.7" stroke="#ffffff" stroke-width="3.0"/>
<polyline points="554.0,490.6 640.0,490.6" stroke="#ffffff" stroke-width="3.0"/>
<polyline points="554.0,511.4 640.0,511.4" stroke="#ffffff" stroke-width="3.0"/>
<polyline points="335.0,665.0 440.0,665.0" stroke="#ffffff" stroke-width="3.2"/>
<polyline points="335.0,686.0 440.0,686.0" stroke="#ffffff" stroke-width="3.2"/>
<polyline points="335.0,708.0 440.0,708.0" stroke="#ffffff" stroke-width="3.2"/>
<polyline points="350.8,690.0 350.8,712.0" stroke="#ffffff" stroke-width="3.0"/>
<polyline points="373.4,690.0 373.4,712.0" stroke="#ffffff" stroke-width="3.0"/>
<polyline points="396.0,690.0 396.0,712.0" stroke="#ffffff" stroke-width="3.0"/>
<polyline points="418.6,690.0 418.6,712.0" stroke="#ffffff" stroke-width="3.0"/>
<polyline points="336.0,730.0 400.0,730.0" stroke="#ffffff" stroke-width="3.0"/>
<polyline points="336.0,752.0 372.0,752.0" stroke="#ffffff" stroke-width="3.0"/>
<polyline points="336.0,800.0 380.0,782.0 400.0,768.0 412.0,745.0" stroke="#ffffff" stroke-width="3.0"/>
<polyline points="337.0,823.0 385.0,801.0 410.0,786.0 423.0,760.0" stroke="#ffffff" stroke-width="3.0"/>
<polyline points="370.0,755.0 390.0,795.0" stroke="#ffffff" stroke-width="3.0"/>
<polyline points="395.0,738.0 410.0,768.0" stroke="#ffffff" stroke-width="3.0"/>
<polyline points="600.0,415.0 979.0,415.0" stroke="#ffffff" stroke-width="3.4"/>
<polyline points="600.0,449.5 979.0,449.5" stroke="#ffffff" stroke-width="3.4"/>
<polyline points="600.0,476.7 979.0,476.7" stroke="#ffffff" stroke-width="3.4"/>
<polyline points="600.0,505.0 979.0,505.0" stroke="#ffffff" stroke-width="3.4"/>
<polyline points="600.0,531.0 979.0,531.0" stroke="#ffffff" stroke-width="7.0"/>
<polyline points="600.0,560.7 979.0,560.7" stroke="#ffffff" stroke-width="3.4"/>
<polyline points="600.0,589.0 979.0,589.0" stroke="#ffffff" stroke-width="3.4"/>
<polyline points="600.0,617.6 979.0,617.6" stroke="#ffffff" stroke-width="3.4"/>
<polyline points="600.0,646.0 979.0,646.0" stroke="#ffffff" stroke-width="7.0"/>
<polyline points="600.0,672.0 979.0,672.0" stroke="#ffffff" stroke-width="3.4"/>
<polyline points="530.0,697.0 979.0,697.0" stroke="#ffffff" stroke-width="3.4"/>
<polyline points="530.0,724.0 979.0,724.0" stroke="#ffffff" stroke-width="3.4"/>
<polyline points="530.0,751.0 979.0,751.0" stroke="#ffffff" stroke-width="3.4"/>
<polyline points="530.0,776.0 979.0,776.0" stroke="#ffffff" stroke-width="3.4"/>
<polyline points="570.0,690.0 570.0,780.0" stroke="#ffffff" stroke-width="3.2"/>
<polyline points="598.0,690.0 598.0,780.0" stroke="#ffffff" stroke-width="3.2"/>
<polyline points="624.0,690.0 624.0,780.0" stroke="#ffffff" stroke-width="3.2"/>
<polyline points="648.0,690.0 648.0,780.0" stroke="#ffffff" stroke-width="3.2"/>
<polyline points="668.0,411.0 668.0,800.0" stroke="#ffffff" stroke-width="3.4"/>
<polyline points="695.0,411.0 695.0,800.0" stroke="#ffffff" stroke-width="3.4"/>
<polyline points="722.0,411.0 722.0,800.0" stroke="#ffffff" stroke-width="3.4"/>
<polyline points="779.0,411.0 779.0,800.0" stroke="#ffffff" stroke-width="3.4"/>
<polyline points="836.0,411.0 836.0,800.0" stroke="#ffffff" stroke-width="3.4"/>
<polyline points="893.0,411.0 893.0,800.0" stroke="#ffffff" stroke-width="3.4"/>
<polyline points="950.0,411.0 950.0,800.0" stroke="#ffffff" stroke-width="3.4"/>
<polyline points="807.0,411.0 807.0,800.0" stroke="#ffffff" stroke-width="1.8"/>
<polyline points="864.0,411.0 864.0,800.0" stroke="#ffffff" stroke-width="1.8"/>
<polyline points="921.0,411.0 921.0,800.0" stroke="#ffffff" stroke-width="1.8"/>
<polyline points="810.0,811.0 979.0,811.0" stroke="#ffffff" stroke-width="3.4"/>
<polyline points="810.0,830.0 979.0,830.0" stroke="#ffffff" stroke-width="3.4"/>
<polyline points="810.0,851.0 979.0,851.0" stroke="#ffffff" stroke-width="3.4"/>
<polyline points="810.0,873.0 979.0,873.0" stroke="#ffffff" stroke-width="6.0"/>
<polyline points="810.0,896.5 979.0,896.5" stroke="#ffffff" stroke-width="3.4"/>
<polyline points="640.0,920.0 979.0,920.0" stroke="#ffffff" stroke-width="3.4"/>
<polyline points="640.0,941.7 979.0,941.7" stroke="#ffffff" stroke-width="3.4"/>
<polyline points="640.0,965.5 979.0,965.5" stroke="#ffffff" stroke-width="3.4"/>
<polyline points="640.0,989.0 979.0,989.0" stroke="#ffffff" stroke-width="6.0"/>
<polyline points="640.0,1010.6 979.0,1010.6" stroke="#ffffff" stroke-width="3.4"/>
<polyline points="640.0,1032.0 979.0,1032.0" stroke="#ffffff" stroke-width="3.4"/>
<polyline points="640.0,1056.0 979.0,1056.0" stroke="#ffffff" stroke-width="3.4"/>
<polyline points="640.0,1079.6 979.0,1079.6" stroke="#ffffff" stroke-width="3.4"/>
<polyline points="640.0,1103.0 979.0,1103.0" stroke="#ffffff" stroke-width="3.4"/>
<polyline points="680.0,760.0 712.0,820.0 745.0,890.0" stroke="#ffffff" stroke-width="6.0"/>
<polyline points="725.0,762.0 760.0,815.0 792.0,862.0" stroke="#ffffff" stroke-width="3.4"/>
<polyline points="770.0,770.0 805.0,828.0" stroke="#ffffff" stroke-width="3.4"/>
<polyline points="700.0,800.0 775.0,772.0" stroke="#ffffff" stroke-width="3.4"/>
<polyline points="712.0,830.0 792.0,800.0" stroke="#ffffff" stroke-width="3.4"/>
<polyline points="728.0,860.0 805.0,832.0" stroke="#ffffff" stroke-width="3.4"/>
<polyline points="700.0,905.0 735.0,960.0 760.0,1000.0" stroke="#ffffff" stroke-width="3.4"/>
<polyline points="672.0,925.0 700.0,970.0 722.0,1005.0" stroke="#ffffff" stroke-width="3.4"/>
<polyline points="758.0,880.0 790.0,925.0 812.0,962.0" stroke="#ffffff" stroke-width="3.4"/>
<polyline points="847.0,800.0 847.0,1110.0" stroke="#ffffff" stroke-width="3.2"/>
<polyline points="871.0,800.0 871.0,1110.0" stroke="#ffffff" stroke-width="3.2"/>
<polyline points="963.6,800.0 963.6,1110.0" stroke="#ffffff" stroke-width="3.2"/>
<polyline points="899.4,800.0 899.4,1465.0" stroke="#ffffff" stroke-width="6.0"/>
<polyline points="935.0,800.0 935.0,1465.0" stroke="#ffffff" stroke-width="6.0"/>
<polyline points="540.0,987.0 800.0,987.0" stroke="#ffffff" stroke-width="7.0"/>
<polyline points="540.0,1008.0 800.0,1008.0" stroke="#ffffff" stroke-width="3.4"/>
<polyline points="540.0,1032.0 800.0,1032.0" stroke="#ffffff" stroke-width="3.4"/>
<polyline points="540.0,1056.0 800.0,1056.0" stroke="#ffffff" stroke-width="3.4"/>
<polyline points="540.0,1080.0 800.0,1080.0" stroke="#ffffff" stroke-width="3.4"/>
<polyline points="540.0,1101.0 800.0,1101.0" stroke="#ffffff" stroke-width="3.4"/>
<polyline points="540.0,1122.0 800.0,1122.0" stroke="#ffffff" stroke-width="3.4"/>
<polyline points="540.0,1146.0 800.0,1146.0" stroke="#ffffff" stroke-width="3.4"/>
<polyline points="616.5,960.0 616.5,1110.0" stroke="#ffffff" stroke-width="3.2"/>
<polyline points="671.0,960.0 671.0,1110.0" stroke="#ffffff" stroke-width="3.2"/>
<polyline points="726.0,960.0 726.0,1110.0" stroke="#ffffff" stroke-width="3.2"/>
<polyline points="425.0,1121.0 979.0,1121.0" stroke="#ffffff" stroke-width="3.4"/>
<polyline points="425.0,1144.0 979.0,1144.0" stroke="#ffffff" stroke-width="3.4"/>
<polyline points="425.0,1167.6 979.0,1167.6" stroke="#ffffff" stroke-width="3.4"/>
<polyline points="425.0,1212.6 979.0,1212.6" stroke="#ffffff" stroke-width="3.4"/>
<polyline points="425.0,1235.0 979.0,1235.0" stroke="#ffffff" stroke-width="3.4"/>
<polyline points="425.0,1256.5 979.0,1256.5" stroke="#ffffff" stroke-width="3.4"/>
<polyline points="425.0,1280.0 979.0,1280.0" stroke="#ffffff" stroke-width="3.4"/>
<polyline points="425.0,1302.7 979.0,1302.7" stroke="#ffffff" stroke-width="3.4"/>
<polyline points="425.0,1346.6 979.0,1346.6" stroke="#ffffff" stroke-width="3.4"/>
<polyline points="425.0,1365.6 979.0,1365.6" stroke="#ffffff" stroke-width="3.4"/>
<polyline points="425.0,1384.6 979.0,1384.6" stroke="#ffffff" stroke-width="3.4"/>
<polyline points="425.0,1406.0 979.0,1406.0" stroke="#ffffff" stroke-width="3.4"/>
<polyline points="425.0,1427.0 979.0,1427.0" stroke="#ffffff" stroke-width="3.4"/>
<polyline points="425.0,1448.0 979.0,1448.0" stroke="#ffffff" stroke-width="3.4"/>
<polyline points="425.0,1325.0 979.0,1325.0" stroke="#ffffff" stroke-width="7.0"/>
<polyline points="614.0,1100.0 614.0,1465.0" stroke="#ffffff" stroke-width="3.4"/>
<polyline points="669.6,1100.0 669.6,1465.0" stroke="#ffffff" stroke-width="3.4"/>
<polyline points="782.0,1100.0 782.0,1465.0" stroke="#ffffff" stroke-width="3.4"/>
<polyline points="726.5,1100.0 726.5,1465.0" stroke="#ffffff" stroke-width="6.0"/>
<polyline points="841.5,1100.0 841.5,1465.0" stroke="#ffffff" stroke-width="3.2"/>
<polyline points="870.0,1100.0 870.0,1465.0" stroke="#ffffff" stroke-width="3.2"/>
<polyline points="500.0,1214.0 654.0,1190.0 800.0,1190.0" stroke="#ffffff" stroke-width="6.0"/>
<polyline points="24.0,1346.6 425.0,1346.6" stroke="#ffffff" stroke-width="3.2"/>
<polyline points="24.0,1368.0 425.0,1368.0" stroke="#ffffff" stroke-width="3.2"/>
<polyline points="24.0,1389.0 425.0,1389.0" stroke="#ffffff" stroke-width="3.2"/>
<polyline points="24.0,1434.0 425.0,1434.0" stroke="#ffffff" stroke-width="3.2"/>
<polyline points="24.0,1455.0 425.0,1455.0" stroke="#ffffff" stroke-width="3.2"/>
<polyline points="297.4,1320.0 297.4,1465.0" stroke="#ffffff" stroke-width="3.2"/>
<polyline points="328.3,1320.0 328.3,1465.0" stroke="#ffffff" stroke-width="3.2"/>
<polyline points="359.0,1320.0 359.0,1465.0" stroke="#ffffff" stroke-width="3.2"/>
<polyline points="390.0,1320.0 390.0,1465.0" stroke="#ffffff" stroke-width="3.2"/>
<polyline points="454.0,1320.0 454.0,1465.0" stroke="#ffffff" stroke-width="3.2"/>
<polyline points="485.0,1320.0 485.0,1465.0" stroke="#ffffff" stroke-width="3.2"/>
<polyline points="423.0,1100.0 423.0,1323.0 281.0,1427.0 262.0,1465.0" stroke="#ffffff" stroke-width="7.0"/>
<polyline points="24.0,1335.0 55.0,1384.0 80.0,1404.0 100.0,1413.0 160.0,1415.0 250.0,1416.0" stroke="#ffffff" stroke-width="7.0"/>
<polyline points="24.0,1138.0 98.0,1180.0" stroke="#ffffff" stroke-width="5.0"/>
<polyline points="333.6,575.6 411.4,633.5 440.0,660.0" stroke="#ffffff" stroke-width="6.0"/>
<polyline points="292.0,800.0 360.0,752.0 440.0,700.0" stroke="#ffffff" stroke-width="8.0"/>
<polyline points="317.0,780.0 290.0,805.0 274.0,827.0 267.0,923.0 265.0,1041.0" stroke="#ffffff" stroke-width="6.0"/>
<polyline points="380.0,760.0 420.0,730.0" stroke="#ffffff" stroke-width="3.4"/>
<polyline points="668.0,540.0 705.0,595.0 738.0,642.0 795.0,712.0 836.0,790.0" stroke="#ffffff" stroke-width="7.0"/>
<polyline points="745.0,890.0 790.0,950.0 816.0,995.0 840.0,1040.0 870.0,1090.0 979.0,1135.0" stroke="#ffffff" stroke-width="7.0"/>
<polyline points="600.0,935.0 660.0,920.0 740.0,900.0" stroke="#ffffff" stroke-width="6.0"/>
<polyline points="592.0,1000.0 558.0,1042.0 558.0,1465.0" stroke="#ffffff" stroke-width="6.0"/>
<polyline points="563.0,1107.0 592.0,1183.0 627.0,1246.0 668.0,1333.0" stroke="#ffffff" stroke-width="6.0"/>
<polyline points="586.0,1100.0 625.0,1190.0 669.0,1287.0" stroke="#ffffff" stroke-width="3.2"/>
<polyline points="545.0,1112.0 575.0,1170.0 607.0,1228.0" stroke="#ffffff" stroke-width="3.2"/>
<polyline points="488.0,1124.0 499.0,1211.0" stroke="#ffffff" stroke-width="3.2"/>
<polyline points="488.0,1124.0 527.0,1210.0" stroke="#ffffff" stroke-width="3.2"/>
<polyline points="500.0,1128.0 555.0,1210.0" stroke="#ffffff" stroke-width="3.2"/>
<polyline points="509.0,1145.0 577.0,1166.0" stroke="#ffffff" stroke-width="3.2"/>
<polyline points="457.0,1210.0 457.0,1330.0" stroke="#ffffff" stroke-width="3.2"/>
<polyline points="500.0,1210.0 500.0,1330.0" stroke="#ffffff" stroke-width="3.2"/>
<polyline points="800.0,1090.0 870.0,1160.0 979.0,1215.0" stroke="#ffffff" stroke-width="6.0"/>
<polyline points="650.0,1120.0 720.0,1140.0" stroke="#ffffff" stroke-width="3.2"/>
<polyline points="845.0,1020.0 899.0,1060.0" stroke="#ffffff" stroke-width="3.2"/>
</g>
<polygon points="503.0,536.0 562.0,536.0 562.0,574.0 556.0,586.0 503.0,586.0" fill="#dcdde3" />
<polygon points="937.0,923.0 979.0,923.0 979.0,967.0 937.0,967.0" fill="#dcdde3" />
<polygon points="941.0,938.0 979.0,938.0 979.0,963.0 941.0,963.0" fill="#d8e0f2" />
<polygon points="474.0,1349.0 500.0,1349.0 500.0,1369.0 474.0,1369.0" fill="#dcdde3" />
<polygon points="189.0,435.0 214.0,435.0 214.0,469.0 189.0,469.0" fill="#d4e2cf" />
<polygon points="202.0,488.0 214.0,488.0 214.0,504.0 202.0,504.0" fill="#d4e2cf" />
<polygon points="898.0,500.0 915.0,496.0 979.0,496.0 979.0,590.0 898.0,590.0" fill="#d4e2cf" />
<polygon points="937.0,823.0 979.0,823.0 979.0,851.0 950.0,851.0" fill="#d4e2cf" />
<polygon points="966.0,1065.0 979.0,1060.0 979.0,1124.0 966.0,1124.0" fill="#d4e2cf" />
<polygon points="560.0,1330.0 628.0,1330.0 628.0,1382.0 560.0,1382.0" fill="#d4e2cf" />
<polygon points="841.0,1337.0 875.0,1337.0 875.0,1356.0 841.0,1356.0" fill="#d4e2cf" />
<polygon points="857.0,1337.0 875.0,1337.0 875.0,1355.0 857.0,1355.0" fill="#d8e0f2" />
<polygon points="784.0,1100.0 792.0,1100.0 790.0,1136.0 784.0,1136.0" fill="#d4e2cf" />
<polygon points="276.0,1040.0 300.0,1034.0 330.0,1062.0 345.0,1120.0 420.0,1160.0 423.0,1170.0 423.0,1320.0 276.0,1320.0" fill="#d4e2cf" />
<rect x="125" y="1118" width="140" height="202" rx="4" fill="#aae2d5"/>
<polygon points="125.0,1118.0 154.0,1118.0 154.0,1155.0 125.0,1155.0" fill="#d4e2cf" />
<polygon points="131.0,1295.0 180.0,1295.0 186.0,1306.0 215.0,1306.0 215.0,1320.0 131.0,1320.0" fill="#d4e2cf" />
<polygon points="375.0,1167.0 407.0,1167.0 407.0,1200.0 375.0,1198.0" fill="#d8e0f2" />
<polygon points="380.0,1200.0 410.0,1195.0 416.0,1240.0 385.0,1245.0" fill="#d8e0f2" />
<polygon points="382.0,1250.0 410.0,1250.0 414.0,1307.0 384.0,1307.0" fill="#d8e0f2" />
<polyline points="277.0,1100.0 300.0,1088.0 320.0,1090.0 335.0,1098.0" fill="none" stroke="#ffffff" stroke-width="3" stroke-linejoin="round" stroke-linecap="round" />
<polyline points="300.0,1140.0 310.0,1165.0 335.0,1168.0 348.0,1170.0" fill="none" stroke="#ffffff" stroke-width="2.5" stroke-linejoin="round" stroke-linecap="round" />
<path d="M462.0,688.0 C470.0,686.0 480.8,683.3 490.0,686.0 C499.2,688.7 510.0,697.2 517.0,704.0 C524.0,710.8 525.0,717.5 532.0,727.0 C539.0,736.5 550.0,753.0 559.0,761.0 C568.0,769.0 573.2,772.5 586.0,775.0 C598.8,777.5 622.7,774.2 636.0,776.0 C649.3,777.8 652.7,776.0 666.0,786.0 C679.3,796.0 706.3,823.3 716.0,836.0 C725.7,848.7 723.0,853.3 724.0,862.0 C725.0,870.7 725.0,881.0 722.0,888.0 C719.0,895.0 714.7,900.2 706.0,904.0 C697.3,907.8 685.0,910.0 670.0,911.0 C655.0,912.0 627.7,909.2 616.0,910.0 C604.3,910.8 604.7,912.3 600.0,916.0 C595.3,919.7 590.8,922.8 588.0,932.0 C585.2,941.2 584.7,962.3 583.0,971.0 C581.3,979.7 585.5,974.7 578.0,984.0 C570.5,993.3 549.7,1012.2 538.0,1027.0 C526.3,1041.8 519.7,1059.8 508.0,1073.0 C496.3,1086.2 479.2,1098.2 468.0,1106.0 C456.8,1113.8 447.8,1114.3 441.0,1120.0 C434.2,1125.7 429.5,1132.3 427.0,1140.0 C424.5,1147.7 426.5,1158.8 426.0,1166.0 C425.5,1173.2 427.2,1182.3 424.0,1183.0 C420.8,1183.7 413.8,1173.2 407.0,1170.0 C400.2,1166.8 391.2,1167.5 383.0,1164.0 C374.8,1160.5 364.3,1155.8 358.0,1149.0 C351.7,1142.2 348.5,1133.5 345.0,1123.0 C341.5,1112.5 341.0,1095.8 337.0,1086.0 C333.0,1076.2 327.3,1073.0 321.0,1064.0 C314.7,1055.0 305.5,1042.2 299.0,1032.0 C292.5,1021.8 283.0,1014.8 282.0,1003.0 C281.0,991.2 288.8,976.2 293.0,961.0 C297.2,945.8 304.0,924.3 307.0,912.0 C310.0,899.7 309.7,897.3 311.0,887.0 C312.3,876.7 311.7,861.3 315.0,850.0 C318.3,838.7 326.3,825.7 331.0,819.0 C335.7,812.3 333.5,814.5 343.0,810.0 C352.5,805.5 375.8,799.5 388.0,792.0 C400.2,784.5 409.7,773.2 416.0,765.0 C422.3,756.8 422.7,751.7 426.0,743.0 C429.3,734.3 433.3,720.5 436.0,713.0 C438.7,705.5 437.7,702.2 442.0,698.0 C446.3,693.8 454.0,690.0 462.0,688.0 Z" fill="#d4e2cf"/>
<path d="M457.0,704.0 C462.8,701.2 472.5,706.0 480.0,708.0 C487.5,710.0 495.8,712.2 502.0,716.0 C508.2,719.8 512.5,724.3 517.0,731.0 C521.5,737.7 525.7,749.0 529.0,756.0 C532.3,763.0 532.0,768.5 537.0,773.0 C542.0,777.5 550.0,778.8 559.0,783.0 C568.0,787.2 582.0,794.5 591.0,798.0 C600.0,801.5 606.3,804.7 613.0,804.0 C619.7,803.3 625.7,795.0 631.0,794.0 C636.3,793.0 641.3,794.8 645.0,798.0 C648.7,801.2 652.8,806.3 653.0,813.0 C653.2,819.7 647.2,829.8 646.0,838.0 C644.8,846.2 645.7,855.5 646.0,862.0 C646.3,868.5 648.5,872.0 648.0,877.0 C647.5,882.0 647.5,889.2 643.0,892.0 C638.5,894.8 628.0,892.8 621.0,894.0 C614.0,895.2 607.2,895.2 601.0,899.0 C594.8,902.8 589.0,910.0 584.0,917.0 C579.0,924.0 574.3,932.3 571.0,941.0 C567.7,949.7 567.7,959.2 564.0,969.0 C560.3,978.8 558.5,986.7 549.0,1000.0 C539.5,1013.3 520.7,1034.3 507.0,1049.0 C493.3,1063.7 480.2,1078.5 467.0,1088.0 C453.8,1097.5 439.2,1101.7 428.0,1106.0 C416.8,1110.3 405.3,1110.0 400.0,1114.0 C394.7,1118.0 395.2,1122.7 396.0,1130.0 C396.8,1137.3 407.7,1152.7 405.0,1158.0 C402.3,1163.3 385.5,1165.0 380.0,1162.0 C374.5,1159.0 375.2,1147.3 372.0,1140.0 C368.8,1132.7 364.2,1124.3 361.0,1118.0 C357.8,1111.7 360.0,1116.8 353.0,1102.0 C346.0,1087.2 328.5,1048.5 319.0,1029.0 C309.5,1009.5 300.0,996.5 296.0,985.0 C292.0,973.5 293.5,968.2 295.0,960.0 C296.5,951.8 301.8,946.2 305.0,936.0 C308.2,925.8 311.8,908.3 314.0,899.0 C316.2,889.7 316.3,887.2 318.0,880.0 C319.7,872.8 321.5,863.3 324.0,856.0 C326.5,848.7 329.5,840.5 333.0,836.0 C336.5,831.5 341.0,829.5 345.0,829.0 C349.0,828.5 353.4,831.5 357.0,832.7 C360.6,833.9 363.4,836.3 366.6,836.3 C369.8,836.3 373.3,831.3 376.0,832.7 C378.7,834.1 379.8,841.6 383.0,844.6 C386.2,847.6 391.8,852.9 395.0,850.5 C398.2,848.1 398.0,834.5 402.0,830.3 C406.0,826.1 415.2,828.7 419.0,825.5 C422.8,822.3 421.8,816.0 424.8,811.3 C427.8,806.5 435.0,803.4 436.8,797.0 C438.6,790.6 434.8,779.0 435.6,773.0 C436.4,767.0 440.5,767.1 441.5,761.0 C442.5,754.9 440.9,742.5 441.5,736.4 C442.1,730.3 442.4,729.9 445.0,724.5 C447.6,719.1 451.2,706.8 457.0,704.0 Z" fill="#d8e0f2" stroke="#5fa864" stroke-width="1.2" stroke-opacity="0.75"/>
<circle cx="396" cy="876" r="7" fill="#d4e2cf"/>
<ellipse cx="659" cy="901" rx="7" ry="6" fill="#d8e0f2"/>
<polyline points="455.0,702.0 470.0,698.0 500.0,700.0 515.0,712.0" fill="none" stroke="#5fa864" stroke-width="1.3" stroke-linejoin="round" stroke-linecap="round" stroke-dasharray="5 3" opacity="0.8"/>
<polyline points="446.0,740.0 430.0,800.0 400.0,820.0 360.0,830.0" fill="none" stroke="#5fa864" stroke-width="1.3" stroke-linejoin="round" stroke-linecap="round" stroke-dasharray="5 3" opacity="0.8"/>
<polyline points="660.0,800.0 700.0,830.0 715.0,860.0" fill="none" stroke="#5fa864" stroke-width="1.3" stroke-linejoin="round" stroke-linecap="round" stroke-dasharray="5 3" opacity="0.8"/>
<polyline points="650.0,880.0 690.0,875.0 718.0,880.0" fill="none" stroke="#5fa864" stroke-width="1.3" stroke-linejoin="round" stroke-linecap="round" stroke-dasharray="5 3" opacity="0.8"/>
<polyline points="668.0,830.0 665.0,900.0" fill="none" stroke="#5fa864" stroke-width="1.3" stroke-linejoin="round" stroke-linecap="round" stroke-dasharray="5 3" opacity="0.8"/>
<polyline points="300.0,1045.0 320.0,1080.0 330.0,1130.0 340.0,1200.0" fill="none" stroke="#5fa864" stroke-width="1.3" stroke-linejoin="round" stroke-linecap="round" stroke-dasharray="5 3" opacity="0.8"/>
<polyline points="300.0,1190.0 350.0,1250.0 380.0,1320.0" fill="none" stroke="#5fa864" stroke-width="1.3" stroke-linejoin="round" stroke-linecap="round" stroke-dasharray="5 3" opacity="0.8"/>
<polyline points="290.0,1260.0 330.0,1230.0 360.0,1200.0" fill="none" stroke="#5fa864" stroke-width="1.3" stroke-linejoin="round" stroke-linecap="round" stroke-dasharray="5 3" opacity="0.8"/>
<polyline points="350.0,1250.0 340.0,1320.0" fill="none" stroke="#5fa864" stroke-width="1.3" stroke-linejoin="round" stroke-linecap="round" stroke-dasharray="5 3" opacity="0.8"/>
<polyline points="285.0,1110.0 310.0,1150.0 305.0,1200.0 290.0,1240.0" fill="none" stroke="#5fa864" stroke-width="1.3" stroke-linejoin="round" stroke-linecap="round" stroke-dasharray="5 3" opacity="0.8"/>
<polyline points="300.0,1300.0 330.0,1280.0 370.0,1290.0" fill="none" stroke="#5fa864" stroke-width="1.3" stroke-linejoin="round" stroke-linecap="round" stroke-dasharray="5 3" opacity="0.8"/>
<polyline points="365.0,1170.0 370.0,1230.0 360.0,1290.0" fill="none" stroke="#5fa864" stroke-width="1.3" stroke-linejoin="round" stroke-linecap="round" stroke-dasharray="5 3" opacity="0.8"/>
<polyline points="380.0,1320.0 395.0,1250.0 420.0,1230.0" fill="none" stroke="#5fa864" stroke-width="1.3" stroke-linejoin="round" stroke-linecap="round" stroke-dasharray="5 3" opacity="0.8"/>
<path d="M447.0,712.0 C450.8,710.3 461.2,703.5 470.0,702.0 C478.8,700.5 492.2,700.7 500.0,703.0 C507.8,705.3 512.0,709.8 517.0,716.0 C522.0,722.2 525.3,731.0 530.0,740.0 C534.7,749.0 538.3,762.5 545.0,770.0 C551.7,777.5 560.8,780.8 570.0,785.0 C579.2,789.2 590.0,794.2 600.0,795.0 C610.0,795.8 625.0,790.8 630.0,790.0" fill="none" stroke="#5fa864" stroke-width="1.2" opacity="0.85"/>
<path d="M440.0,735.0 C437.5,740.8 430.8,759.2 425.0,770.0 C419.2,780.8 414.2,792.0 405.0,800.0 C395.8,808.0 380.0,813.3 370.0,818.0 C360.0,822.7 351.7,822.7 345.0,828.0 C338.3,833.3 334.2,841.3 330.0,850.0 C325.8,858.7 322.3,868.3 320.0,880.0 C317.7,891.7 318.0,906.7 316.0,920.0 C314.0,933.3 310.7,948.3 308.0,960.0 C305.3,971.7 300.5,980.8 300.0,990.0 C299.5,999.2 300.0,1003.3 305.0,1015.0 C310.0,1026.7 322.5,1045.8 330.0,1060.0 C337.5,1074.2 345.0,1090.0 350.0,1100.0 C355.0,1110.0 358.3,1116.7 360.0,1120.0" fill="none" stroke="#5fa864" stroke-width="1.2" opacity="0.85"/>
<path d="M395.0,800.0 C395.8,803.3 397.5,815.0 400.0,820.0 C402.5,825.0 408.3,828.3 410.0,830.0" fill="none" stroke="#5fa864" stroke-width="1.2" opacity="0.85"/>
<path d="M360.0,812.0 C361.3,815.0 366.7,827.0 368.0,830.0" fill="none" stroke="#5fa864" stroke-width="1.2" opacity="0.85"/>
<path d="M420.0,760.0 C422.2,765.0 430.8,785.0 433.0,790.0" fill="none" stroke="#5fa864" stroke-width="1.2" opacity="0.85"/>
<path d="M640.0,800.0 C642.5,803.3 651.7,810.0 655.0,820.0 C658.3,830.0 660.8,848.3 660.0,860.0 C659.2,871.7 651.7,885.0 650.0,890.0" fill="none" stroke="#5fa864" stroke-width="1.2" opacity="0.85"/>
<path d="M655.0,822.0 C662.5,821.7 692.5,820.3 700.0,820.0" fill="none" stroke="#5fa864" stroke-width="1.2" opacity="0.85"/>
<path d="M660.0,845.0 C669.2,845.5 705.8,847.5 715.0,848.0" fill="none" stroke="#5fa864" stroke-width="1.2" opacity="0.85"/>
<path d="M690.0,800.0 C690.8,808.3 694.2,841.7 695.0,850.0" fill="none" stroke="#5fa864" stroke-width="1.2" opacity="0.85"/>
<path d="M370.0,1120.0 C378.3,1118.3 403.3,1115.0 420.0,1110.0 C436.7,1105.0 455.0,1099.2 470.0,1090.0 C485.0,1080.8 497.5,1068.3 510.0,1055.0 C522.5,1041.7 534.2,1025.0 545.0,1010.0 C555.8,995.0 569.2,977.5 575.0,965.0 C580.8,952.5 575.8,943.3 580.0,935.0 C584.2,926.7 590.0,920.0 600.0,915.0 C610.0,910.0 633.3,906.7 640.0,905.0" fill="none" stroke="#5fa864" stroke-width="1.2" opacity="0.85"/>
<path d="M172.1,1153.7 C169.8,1153.9 161.4,1157.0 158.4,1154.8 C155.4,1152.6 154.8,1145.5 154.1,1140.7 C153.4,1135.8 154.3,1128.3 154.4,1125.9" fill="none" stroke="#5fa864" stroke-width="1.3" opacity="0.85"/>
<path d="M186.4,1138.3 C186.6,1135.9 187.4,1124.1 188.0,1124.2 C188.6,1124.2 189.1,1135.7 190.1,1138.5 C191.1,1141.3 193.6,1140.7 194.3,1141.1" fill="none" stroke="#5fa864" stroke-width="1.3" opacity="0.85"/>
<path d="M138.0,1236.3 C140.6,1233.8 148.8,1225.3 153.3,1221.7 C157.7,1218.2 164.7,1218.2 164.8,1215.0 C164.8,1211.9 155.3,1204.8 153.4,1202.8" fill="none" stroke="#5fa864" stroke-width="1.3" opacity="0.85"/>
<path d="M170.1,1280.1 C168.0,1280.4 161.2,1284.1 157.4,1282.3 C153.6,1280.6 147.9,1271.3 147.4,1269.5 C146.9,1267.7 152.4,1271.2 154.2,1271.5 C156.0,1271.8 157.4,1271.4 158.0,1271.4" fill="none" stroke="#5fa864" stroke-width="1.3" opacity="0.85"/>
<path d="M199.1,1272.7 C199.6,1272.4 202.5,1269.9 201.9,1271.2 C201.3,1272.5 195.5,1280.4 195.5,1280.6 C195.4,1280.8 200.4,1273.6 201.8,1272.4 C203.3,1271.2 201.8,1271.9 204.2,1273.2 C206.6,1274.6 215.3,1276.8 216.2,1280.6 C217.1,1284.3 210.6,1293.4 209.4,1295.9" fill="none" stroke="#5fa864" stroke-width="1.3" opacity="0.85"/>
<path d="M145.3,1204.4 C143.5,1204.4 137.1,1203.3 134.2,1204.1 C131.3,1204.9 127.6,1208.2 128.0,1209.5 C128.4,1210.8 133.1,1212.4 136.5,1211.8 C139.9,1211.2 145.4,1206.3 148.5,1205.8 C151.5,1205.4 153.7,1208.4 154.7,1208.9" fill="none" stroke="#5fa864" stroke-width="1.3" opacity="0.85"/>
<path d="M205.4,1211.7 C207.8,1211.5 216.4,1213.3 219.6,1210.9 C222.9,1208.4 222.9,1198.3 224.9,1196.8 C226.8,1195.2 230.2,1200.7 231.3,1201.5" fill="none" stroke="#5fa864" stroke-width="1.3" opacity="0.85"/>
<path d="M259.1,1281.2 C259.6,1283.2 262.3,1289.1 262.0,1293.6 C261.7,1298.0 258.7,1304.7 257.1,1307.7 C255.5,1310.6 253.3,1312.1 252.5,1311.2 C251.7,1310.3 253.4,1302.4 252.3,1302.2 C251.1,1302.0 246.6,1308.5 245.5,1309.8" fill="none" stroke="#5fa864" stroke-width="1.3" opacity="0.85"/>
<path d="M181.7,1299.2 C179.5,1298.9 170.3,1295.8 168.3,1297.6 C166.3,1299.3 167.9,1306.4 169.9,1309.8 C171.9,1313.2 179.6,1317.1 180.1,1318.0 C180.6,1318.9 174.9,1315.3 173.0,1315.3 C171.1,1315.3 166.8,1319.4 168.5,1318.0 C170.2,1316.6 180.7,1308.7 183.1,1306.8" fill="none" stroke="#5fa864" stroke-width="1.3" opacity="0.85"/>
<path d="M152.9,1169.1 C150.3,1170.8 141.4,1179.1 137.3,1179.7 C133.1,1180.3 129.5,1173.7 128.0,1172.7 C126.5,1171.7 127.4,1174.6 128.0,1173.8 C128.6,1173.0 130.9,1169.0 131.5,1168.0" fill="none" stroke="#5fa864" stroke-width="1.3" opacity="0.85"/>
<path d="M146.3,1288.2 C146.1,1290.2 142.7,1297.2 144.9,1300.1 C147.1,1303.1 156.7,1305.5 159.4,1305.9 C162.1,1306.3 161.0,1303.2 161.3,1302.6" fill="none" stroke="#5fa864" stroke-width="1.3" opacity="0.85"/>
<path d="M181.2,1216.5 C178.9,1214.2 171.1,1206.8 167.2,1202.6 C163.3,1198.5 160.3,1196.0 157.9,1191.8 C155.5,1187.7 156.3,1181.8 152.8,1177.5 C149.3,1173.3 140.9,1168.9 136.8,1166.4 C132.7,1163.8 129.5,1160.7 128.0,1162.0 C126.5,1163.3 128.0,1172.0 128.0,1174.0" fill="none" stroke="#5fa864" stroke-width="1.3" opacity="0.85"/>
<path d="M209.8,1153.2 C212.3,1153.8 222.1,1158.0 224.4,1156.5 C226.7,1155.0 223.8,1143.7 223.6,1144.2 C223.4,1144.7 223.4,1157.9 223.2,1159.5 C223.0,1161.0 224.6,1153.1 222.6,1153.5 C220.6,1153.8 213.1,1160.1 211.2,1161.4" fill="none" stroke="#5fa864" stroke-width="1.3" opacity="0.85"/>
<path d="M226.2,1215.9 C226.3,1214.4 224.3,1208.8 226.8,1206.5 C229.3,1204.2 237.8,1200.6 241.2,1202.1 C244.7,1203.6 244.9,1214.2 247.3,1215.3 C249.7,1216.5 254.2,1209.9 255.6,1208.9" fill="none" stroke="#5fa864" stroke-width="1.3" opacity="0.85"/>
<path d="M213.6,1142.3 C213.7,1144.5 214.8,1154.7 214.2,1155.4 C213.5,1156.1 210.1,1147.9 209.6,1146.5 C209.0,1145.0 209.9,1146.0 210.9,1146.6 C211.8,1147.2 213.0,1148.2 215.2,1150.2 C217.5,1152.2 222.9,1157.1 224.5,1158.5" fill="none" stroke="#5fa864" stroke-width="1.3" opacity="0.85"/>
<path d="M155.4,1170.5 C156.6,1169.0 161.7,1164.0 163.0,1161.7 C164.4,1159.5 166.0,1160.4 163.6,1157.1 C161.2,1153.8 152.2,1145.8 148.5,1142.0 C144.8,1138.2 141.6,1133.2 141.5,1134.3 C141.3,1135.5 146.9,1144.1 147.6,1148.9 C148.4,1153.7 146.2,1160.6 146.0,1162.9" fill="none" stroke="#5fa864" stroke-width="1.3" opacity="0.85"/>
<path d="M258.4,1306.5 C256.2,1304.3 247.4,1296.7 245.0,1293.7 C242.6,1290.7 244.3,1286.8 244.1,1288.5 C243.8,1290.2 243.0,1304.1 243.5,1304.1 C244.0,1304.0 244.3,1291.6 247.0,1288.1 C249.8,1284.6 257.9,1284.0 260.1,1283.1" fill="none" stroke="#5fa864" stroke-width="1.3" opacity="0.85"/>
<path d="M213.6,1283.6 C215.8,1285.1 223.2,1291.2 226.7,1292.6 C230.2,1294.0 235.1,1290.5 234.7,1291.9 C234.3,1293.3 226.2,1299.6 224.4,1301.2" fill="none" stroke="#5fa864" stroke-width="1.3" opacity="0.85"/>
<path d="M173.2,1277.2 C173.0,1278.5 174.5,1285.5 172.0,1284.9 C169.6,1284.4 158.3,1278.4 158.8,1274.0 C159.2,1269.7 171.4,1261.6 174.5,1258.9 C177.7,1256.2 176.1,1257.4 177.5,1257.8 C178.8,1258.2 181.1,1260.9 182.4,1261.4 C183.8,1261.8 185.0,1260.7 185.5,1260.5" fill="none" stroke="#5fa864" stroke-width="1.3" opacity="0.85"/>
<path d="M251.9,1154.6 C249.3,1156.2 237.9,1164.7 236.6,1164.2 C235.2,1163.7 241.3,1155.5 243.8,1151.5 C246.3,1147.4 248.7,1143.5 251.8,1139.9 C254.8,1136.4 260.3,1131.8 262.0,1130.2" fill="none" stroke="#5fa864" stroke-width="1.3" opacity="0.85"/>
<path d="M243.6,1130.3 C242.5,1128.9 237.6,1123.7 237.0,1122.0 C236.3,1120.3 239.7,1120.3 239.7,1120.0 C239.8,1119.7 235.4,1120.0 237.2,1120.0 C238.9,1120.0 248.1,1120.0 250.3,1120.0" fill="none" stroke="#5fa864" stroke-width="1.3" opacity="0.85"/>
<path d="M189.6,1235.8 C191.3,1237.9 200.3,1247.8 200.0,1247.9 C199.8,1248.1 190.1,1236.7 188.2,1236.8 C186.3,1236.9 187.0,1246.2 188.6,1248.7 C190.1,1251.3 194.5,1253.5 197.4,1252.2 C200.3,1250.9 206.7,1242.2 206.2,1241.0 C205.8,1239.8 196.7,1244.2 194.8,1244.8" fill="none" stroke="#5fa864" stroke-width="1.3" opacity="0.85"/>
<path d="M145.6,1136.7 C147.2,1134.6 152.9,1126.9 154.7,1124.1 C156.6,1121.3 157.5,1119.2 156.7,1120.0 C155.8,1120.8 150.7,1126.9 149.5,1128.7 C148.4,1130.5 148.4,1128.2 149.8,1130.7 C151.2,1133.2 157.0,1141.1 158.1,1143.9 C159.2,1146.7 156.6,1146.9 156.3,1147.5" fill="none" stroke="#5fa864" stroke-width="1.3" opacity="0.85"/>
<path d="M195.7,1222.3 C195.5,1222.5 194.6,1220.8 194.2,1223.4 C193.8,1225.9 192.5,1233.1 193.5,1237.5 C194.4,1241.9 196.4,1248.8 199.9,1249.6 C203.3,1250.3 211.3,1240.8 214.0,1241.9 C216.7,1242.9 215.6,1253.7 215.9,1256.0" fill="none" stroke="#5fa864" stroke-width="1.3" opacity="0.85"/>
<path d="M239.2,1151.1 C238.6,1150.1 235.4,1146.5 235.8,1145.2 C236.1,1143.8 241.9,1144.3 241.2,1142.9 C240.6,1141.4 233.6,1137.6 232.0,1136.6" fill="none" stroke="#5fa864" stroke-width="1.3" opacity="0.85"/>
<path d="M145.9,1272.6 C144.0,1274.7 133.9,1284.3 134.5,1284.9 C135.1,1285.4 144.5,1277.9 149.4,1275.9 C154.3,1273.9 161.6,1270.6 163.9,1272.6 C166.3,1274.7 161.8,1287.5 163.5,1288.3 C165.2,1289.1 172.4,1279.3 174.2,1277.5" fill="none" stroke="#5fa864" stroke-width="1.3" opacity="0.85"/>
<path d="M305.0,1245.0 C311.2,1241.2 327.2,1240.3 335.0,1247.0 C342.8,1253.7 352.5,1273.2 352.0,1285.0 C351.5,1296.8 339.8,1314.7 332.0,1318.0 C324.2,1321.3 310.7,1313.0 305.0,1305.0 C299.3,1297.0 298.0,1280.0 298.0,1270.0 C298.0,1260.0 298.8,1248.8 305.0,1245.0 Z" fill="none" stroke="#fff" stroke-width="2"/>
<ellipse cx="936" cy="532" rx="36" ry="24" fill="none" stroke="#5fa864" stroke-width="1.3"/>
<ellipse cx="938" cy="531" rx="25" ry="16" fill="none" stroke="#5fa864" stroke-width="1.3"/>
<polyline points="905.0,568.0 915.0,580.0 935.0,585.0 960.0,570.0 979.0,575.0" fill="none" stroke="#5fa864" stroke-width="1.2" stroke-linejoin="round" stroke-linecap="round" />
<polyline points="910.0,570.0 912.0,590.0" fill="none" stroke="#5fa864" stroke-width="1.2" stroke-linejoin="round" stroke-linecap="round" />
<polyline points="950.0,572.0 950.0,590.0" fill="none" stroke="#5fa864" stroke-width="1.2" stroke-linejoin="round" stroke-linecap="round" />
<polyline points="279.0,1003.0 294.0,1034.0 320.0,1066.0" fill="none" stroke="#ffffff" stroke-width="6" stroke-linejoin="round" stroke-linecap="round" />
<polygon points="277.0,1042.0 298.0,1062.0 306.0,1084.0 277.0,1090.0" fill="#ffffff" />
<path d="M446.0,694.0 C444.5,696.4 437.8,705.7 435.0,712.0 C432.2,718.3 427.8,734.1 425.0,741.0 C422.2,747.9 417.5,758.8 414.0,764.0 C410.5,769.2 402.7,776.5 399.0,780.0 C395.3,783.5 393.3,786.3 386.0,790.0 C378.7,793.7 351.3,804.7 344.0,808.0 C336.7,811.3 334.9,810.1 331.0,815.0 C327.1,819.9 317.9,836.3 315.0,845.0 C312.1,853.7 309.8,875.3 309.0,880.0" fill="none" stroke="#fff" stroke-width="7"/>
<path d="M520.3,705.6 C521.8,707.8 528.4,718.4 533.1,724.6 C537.9,730.9 554.5,753.3 560.9,758.9 C567.4,764.6 579.4,771.4 588.6,773.3 C597.7,775.2 629.9,773.5 639.2,774.9 C648.6,776.3 659.2,778.1 668.6,785.3 C677.9,792.4 712.5,827.5 719.2,836.4 C725.9,845.2 725.7,855.0 726.3,860.8 C726.9,866.6 726.4,881.5 724.4,886.2 C722.5,891.0 715.3,898.8 709.5,901.4 C703.6,904.0 684.4,907.8 674.5,908.5 C664.6,909.2 632.6,906.7 624.4,907.3 C616.3,907.9 608.0,911.1 604.5,913.4 C601.0,915.7 596.3,922.5 594.5,926.9 C592.7,931.2 590.5,945.0 589.4,950.8 C588.3,956.7 586.6,972.2 585.1,976.8 C583.6,981.4 582.2,984.3 576.8,990.4 C571.5,996.5 547.4,1018.9 539.3,1028.9 C531.3,1038.8 516.3,1066.1 507.8,1075.4 C499.4,1084.7 474.7,1103.0 466.7,1108.5 C458.6,1114.0 442.3,1120.8 439.1,1122.4" fill="none" stroke="#fff" stroke-width="8"/>
<path d="M329.0,411.0 C329.0,460.2 329.1,726.5 329.0,780.0 C328.9,833.5 329.2,804.5 328.5,812.0 C327.8,819.5 325.7,829.6 324.0,836.0 C322.3,842.4 318.0,852.5 316.0,860.0 C314.0,867.5 312.5,878.3 309.0,892.0 C305.5,905.7 294.8,946.2 290.0,963.0 C285.2,979.8 275.7,999.7 273.0,1018.0 C270.3,1036.3 270.4,1040.4 270.0,1100.0 C269.6,1159.6 270.0,1416.3 270.0,1465.0" fill="none" stroke="#f2d893" stroke-width="13"/>
<path d="M329.0,411.0 C329.0,460.2 329.1,726.5 329.0,780.0 C328.9,833.5 329.2,804.5 328.5,812.0 C327.8,819.5 325.7,829.6 324.0,836.0 C322.3,842.4 318.0,852.5 316.0,860.0 C314.0,867.5 312.5,878.3 309.0,892.0 C305.5,905.7 294.8,946.2 290.0,963.0 C285.2,979.8 275.7,999.7 273.0,1018.0 C270.3,1036.3 270.4,1040.4 270.0,1100.0 C269.6,1159.6 270.0,1416.3 270.0,1465.0" fill="none" stroke="#fdefca" stroke-width="9"/>
<polygon points="638.0,411.0 636.0,470.0 636.0,529.0 648.0,578.0 675.0,625.0 715.0,670.0 770.0,720.0 800.0,765.0 806.0,800.0 810.0,860.0 814.0,994.0 806.0,1100.0 786.0,1200.0 785.0,1300.0 787.0,1465.0 808.0,1465.0 811.0,1300.0 811.0,1200.0 825.0,1100.0 838.0,994.0 838.0,875.0 829.0,800.0 824.0,765.0 808.0,718.0 760.0,670.0 712.0,625.0 678.0,578.0 660.0,529.0 658.0,470.0 658.0,411.0" fill="#fdefca" stroke="#f2d893" stroke-width="2"/>
<polyline points="648.0,411.0 648.0,529.0 662.0,585.0 695.0,640.0 775.0,715.0 812.0,775.0 818.0,800.0 826.0,994.0 815.0,1100.0 798.0,1250.0 797.0,1465.0" fill="none" stroke="#f2d893" stroke-width="1.2" stroke-linejoin="round" stroke-linecap="round" />
<polyline points="812.0,1200.0 822.0,1290.0 827.0,1330.0" fill="none" stroke="#f2d893" stroke-width="4" stroke-linejoin="round" stroke-linecap="round" />
<polyline points="812.0,1200.0 822.0,1290.0 827.0,1330.0" fill="none" stroke="#fdefca" stroke-width="2.4" stroke-linejoin="round" stroke-linecap="round" />
<path d="M614,529 C626,528 634,522 637,505" fill="none" stroke="#f2d893" stroke-width="5"/><path d="M614,529 C626,528 634,522 637,505" fill="none" stroke="#fdefca" stroke-width="3"/>
<path d="M614,534 C628,536 636,545 645,565" fill="none" stroke="#f2d893" stroke-width="5"/><path d="M614,534 C628,536 636,545 645,565" fill="none" stroke="#fdefca" stroke-width="3"/>
<path d="M979.0,652.0 C972.5,660.0 952.3,682.8 940.0,700.0 C927.7,717.2 914.2,740.5 905.0,755.0 C895.8,769.5 895.0,777.8 885.0,787.0 C875.0,796.2 853.3,805.3 845.0,810.0 C836.7,814.7 836.7,814.2 835.0,815.0" fill="none" stroke="#f2d893" stroke-width="9"/><path d="M979.0,652.0 C972.5,660.0 952.3,682.8 940.0,700.0 C927.7,717.2 914.2,740.5 905.0,755.0 C895.8,769.5 895.0,777.8 885.0,787.0 C875.0,796.2 853.3,805.3 845.0,810.0 C836.7,814.7 836.7,814.2 835.0,815.0" fill="none" stroke="#fdefca" stroke-width="6"/>
<path d="M905.0,780.0 C899.2,782.2 881.2,790.8 870.0,793.0 C858.8,795.2 843.3,793.0 838.0,793.0" fill="none" stroke="#f2d893" stroke-width="6"/><path d="M905.0,780.0 C899.2,782.2 881.2,790.8 870.0,793.0 C858.8,795.2 843.3,793.0 838.0,793.0" fill="none" stroke="#fdefca" stroke-width="4"/>
<text x="24" y="537" font-size="22" fill="#5a5e65" font-weight="400" font-family="Liberation Sans" textLength="159" lengthAdjust="spacing" paint-order="stroke" stroke="#fff" stroke-width="4" stroke-linejoin="round" >GREENWOOD</text>
<text x="24" y="537" font-size="22" fill="#5a5e65" stroke="#5a5e65" stroke-width="0.25" font-family="Liberation Sans" textLength="159" lengthAdjust="spacing">GREENWOOD</text>
<text x="250" y="526" font-size="22" fill="#5a5e65" font-weight="400" font-family="Liberation Sans" textLength="158" lengthAdjust="spacing" paint-order="stroke" stroke="#fff" stroke-width="4" stroke-linejoin="round" >NORTHWEST</text>
<text x="250" y="526" font-size="22" fill="#5a5e65" stroke="#5a5e65" stroke-width="0.25" font-family="Liberation Sans" textLength="158" lengthAdjust="spacing">NORTHWEST</text>
<text x="275" y="550" font-size="22" fill="#5a5e65" font-weight="400" font-family="Liberation Sans" textLength="110" lengthAdjust="spacing" paint-order="stroke" stroke="#fff" stroke-width="4" stroke-linejoin="round" >SEATTLE</text>
<text x="275" y="550" font-size="22" fill="#5a5e65" stroke="#5a5e65" stroke-width="0.25" font-family="Liberation Sans" textLength="110" lengthAdjust="spacing">SEATTLE</text>
<text x="821" y="771" font-size="22" fill="#5a5e65" font-weight="400" font-family="Liberation Sans" textLength="149" lengthAdjust="spacing" paint-order="stroke" stroke="#fff" stroke-width="4" stroke-linejoin="round" >ROOSEVELT</text>
<text x="821" y="771" font-size="22" fill="#5a5e65" stroke="#5a5e65" stroke-width="0.25" font-family="Liberation Sans" textLength="149" lengthAdjust="spacing">ROOSEVELT</text>
<text x="649" y="877" font-size="22" fill="#5a5e65" font-weight="400" font-family="Liberation Sans" textLength="155" lengthAdjust="spacing" paint-order="stroke" stroke="#fff" stroke-width="4" stroke-linejoin="round" >GREEN LAKE</text>
<text x="649" y="877" font-size="22" fill="#5a5e65" stroke="#5a5e65" stroke-width="0.25" font-family="Liberation Sans" textLength="155" lengthAdjust="spacing">GREEN LAKE</text>
<text x="25" y="992" font-size="22" fill="#5a5e65" font-weight="400" font-family="Liberation Sans" textLength="197" lengthAdjust="spacing" paint-order="stroke" stroke="#fff" stroke-width="4" stroke-linejoin="round" >PHINNEY RIDGE</text>
<text x="25" y="992" font-size="22" fill="#5a5e65" stroke="#5a5e65" stroke-width="0.25" font-family="Liberation Sans" textLength="197" lengthAdjust="spacing">PHINNEY RIDGE</text>
<text x="915" y="1214" font-size="22" fill="#5a5e65" font-weight="400" font-family="Liberation Sans" textLength="70" lengthAdjust="spacing" paint-order="stroke" stroke="#fff" stroke-width="4" stroke-linejoin="round" >UNIV</text>
<text x="915" y="1214" font-size="22" fill="#5a5e65" stroke="#5a5e65" stroke-width="0.25" font-family="Liberation Sans" textLength="70" lengthAdjust="spacing">UNIV</text>
<text x="936" y="1237" font-size="22" fill="#5a5e65" font-weight="400" font-family="Liberation Sans" textLength="50" lengthAdjust="spacing" paint-order="stroke" stroke="#fff" stroke-width="4" stroke-linejoin="round" >HEI</text>
<text x="936" y="1237" font-size="22" fill="#5a5e65" stroke="#5a5e65" stroke-width="0.25" font-family="Liberation Sans" textLength="50" lengthAdjust="spacing">HEI</text>
<text x="958" y="1380" font-size="22" fill="#5a5e65" font-weight="400" font-family="Liberation Sans" textLength="30" lengthAdjust="spacing" paint-order="stroke" stroke="#fff" stroke-width="4" stroke-linejoin="round" >ER</text>
<text x="958" y="1380" font-size="22" fill="#5a5e65" stroke="#5a5e65" stroke-width="0.25" font-family="Liberation Sans" textLength="30" lengthAdjust="spacing">ER</text>
<text x="958" y="1403" font-size="22" fill="#5a5e65" font-weight="400" font-family="Liberation Sans" textLength="30" lengthAdjust="spacing" paint-order="stroke" stroke="#fff" stroke-width="4" stroke-linejoin="round" >TR</text>
<text x="958" y="1403" font-size="22" fill="#5a5e65" stroke="#5a5e65" stroke-width="0.25" font-family="Liberation Sans" textLength="30" lengthAdjust="spacing">TR</text>
<text x="409" y="1446" font-size="22" fill="#5a5e65" font-weight="400" font-family="Liberation Sans" textLength="182" lengthAdjust="spacing" paint-order="stroke" stroke="#fff" stroke-width="4" stroke-linejoin="round" >WALLINGFORD</text>
<text x="409" y="1446" font-size="22" fill="#5a5e65" stroke="#5a5e65" stroke-width="0.25" font-family="Liberation Sans" textLength="182" lengthAdjust="spacing">WALLINGFORD</text>
<text x="345" y="421.8" font-size="18" fill="#5a5e64" font-weight="400" font-family="Liberation Sans" textLength="73" lengthAdjust="spacingAndGlyphs" paint-order="stroke" stroke="#fff" stroke-width="4" stroke-linejoin="round" >N 90th St</text>
<text x="519" y="536.4" font-size="18" fill="#5a5e64" font-weight="400" font-family="Liberation Sans" textLength="73" lengthAdjust="spacingAndGlyphs" paint-order="stroke" stroke="#fff" stroke-width="4" stroke-linejoin="round" >N 85th St</text>
<text x="119" y="648.8" font-size="18" fill="#5a5e64" font-weight="400" font-family="Liberation Sans" textLength="74" lengthAdjust="spacingAndGlyphs" paint-order="stroke" stroke="#fff" stroke-width="4" stroke-linejoin="round" >N 80th St</text>
<text x="352" y="648.8" font-size="18" fill="#5a5e64" font-weight="400" font-family="Liberation Sans" textLength="73" lengthAdjust="spacingAndGlyphs" paint-order="stroke" stroke="#fff" stroke-width="4" stroke-linejoin="round" >N 80th St</text>
<text x="742" y="652.8" font-size="18" fill="#5a5e64" font-weight="400" font-family="Liberation Sans" textLength="84" lengthAdjust="spacingAndGlyphs" paint-order="stroke" stroke="#fff" stroke-width="4" stroke-linejoin="round" >NE 80th St</text>
<text x="506" y="1331.8" font-size="18" fill="#5a5e64" font-weight="400" font-family="Liberation Sans" textLength="73" lengthAdjust="spacingAndGlyphs" paint-order="stroke" stroke="#fff" stroke-width="4" stroke-linejoin="round" >N 50th St</text>
<text x="825" y="1334.8" font-size="18" fill="#5a5e64" font-weight="400" font-family="Liberation Sans" textLength="61" lengthAdjust="spacingAndGlyphs" paint-order="stroke" stroke="#fff" stroke-width="4" stroke-linejoin="round" >NE 50th</text>
<text x="962" y="1334.8" font-size="18" fill="#5a5e64" font-weight="400" font-family="Liberation Sans" textLength="24" lengthAdjust="spacingAndGlyphs" paint-order="stroke" stroke="#fff" stroke-width="4" stroke-linejoin="round" >50</text>
<text x="962" y="996.8" font-size="18" fill="#5a5e64" font-weight="400" font-family="Liberation Sans" textLength="26" lengthAdjust="spacingAndGlyphs" paint-order="stroke" stroke="#fff" stroke-width="4" stroke-linejoin="round" >NE</text>
<text x="178" y="1422.8" font-size="18" fill="#5a5e64" font-weight="400" font-family="Liberation Sans" textLength="73" lengthAdjust="spacingAndGlyphs" paint-order="stroke" stroke="#fff" stroke-width="4" stroke-linejoin="round" >N 46th St</text>
<text transform="translate(96,547) rotate(90)" x="0" y="0" font-size="18" fill="#5a5e64" font-weight="400" font-family="Liberation Sans" textLength="142" lengthAdjust="spacingAndGlyphs" paint-order="stroke" stroke="#fff" stroke-width="4" stroke-linejoin="round" >Greenwood Ave N</text>
<text transform="translate(114,1003) rotate(90)" x="0" y="0" font-size="18" fill="#5a5e64" font-weight="400" font-family="Liberation Sans" textLength="115" lengthAdjust="spacingAndGlyphs" paint-order="stroke" stroke="#fff" stroke-width="4" stroke-linejoin="round" >Phinney Ave N</text>
<text transform="translate(662,660) rotate(90)" x="0" y="0" font-size="18" fill="#5a5e64" font-weight="400" font-family="Liberation Sans" textLength="86" lengthAdjust="spacingAndGlyphs" paint-order="stroke" stroke="#fff" stroke-width="4" stroke-linejoin="round" >1st Ave NE</text>
<text transform="translate(719,1191) rotate(90)" x="0" y="0" font-size="18" fill="#5a5e64" font-weight="400" font-family="Liberation Sans" textLength="118" lengthAdjust="spacingAndGlyphs" paint-order="stroke" stroke="#fff" stroke-width="4" stroke-linejoin="round" >Latona Ave NE</text>
<text transform="translate(206,1434) rotate(90)" x="0" y="0" font-size="18" fill="#5a5e64" font-weight="400" font-family="Liberation Sans" textLength="60" lengthAdjust="spacingAndGlyphs" paint-order="stroke" stroke="#fff" stroke-width="4" stroke-linejoin="round" >Fremont</text>
<text transform="translate(587,1214) rotate(-17)" x="0" y="0" font-size="18" fill="#5a5e64" font-weight="400" font-family="Liberation Sans" textLength="74" lengthAdjust="spacingAndGlyphs" paint-order="stroke" stroke="#fff" stroke-width="4" stroke-linejoin="round" >N 56th St</text>
<text transform="translate(297,1424) rotate(-37)" x="0" y="0" font-size="18" fill="#5a5e64" font-weight="400" font-family="Liberation Sans" textLength="150" lengthAdjust="spacingAndGlyphs" paint-order="stroke" stroke="#fff" stroke-width="4" stroke-linejoin="round" >Green Lake Way N</text>
<text transform="translate(643,504) rotate(71)" x="0" y="0" font-size="18" fill="#7a4a2a" font-weight="400" font-family="Liberation Sans" textLength="104" lengthAdjust="spacingAndGlyphs" paint-order="stroke" stroke="#fff" stroke-width="4" stroke-linejoin="round" >I-5 Express</text>
<text transform="translate(815,782) rotate(86)" x="0" y="0" font-size="18" fill="#7a4a2a" font-weight="400" font-family="Liberation Sans" textLength="106" lengthAdjust="spacingAndGlyphs" paint-order="stroke" stroke="#fff" stroke-width="4" stroke-linejoin="round" >I-5 Express</text>
<text transform="translate(815,1200) rotate(-86)" x="0" y="0" font-size="18" fill="#7a4a2a" font-weight="400" font-family="Liberation Sans" textLength="104" lengthAdjust="spacingAndGlyphs" paint-order="stroke" stroke="#fff" stroke-width="4" stroke-linejoin="round" >I-5 Express</text>
<defs><path id="p1" d="M524,716 L559,763 C570,772 580,777 600,777 L636,778 C650,780 660,784 672,795 L700,822"/><path id="p2" d="M581,992 C581,960 584,932 599,914 C610,906 640,908 670,909 C690,907 705,902 715,890"/><path id="p3" d="M446,1116 C470,1104 490,1090 507,1071 C520,1055 530,1040 540,1022"/></defs>
<text font-size="18" fill="#5a5e64" font-family="Liberation Sans" paint-order="stroke" stroke="#fff" stroke-width="4" stroke-linejoin="round" dominant-baseline="central"><textPath href="#p1" textLength="165" lengthAdjust="spacingAndGlyphs">East Green Lake Dr N</textPath></text>
<text font-size="18" fill="#5a5e64" font-family="Liberation Sans" paint-order="stroke" stroke="#fff" stroke-width="4" stroke-linejoin="round" dominant-baseline="central"><textPath href="#p2" textLength="170" lengthAdjust="spacingAndGlyphs">East Green Lake Way N</textPath></text>
<text font-size="18" fill="#5a5e64" font-family="Liberation Sans" paint-order="stroke" stroke="#fff" stroke-width="4" stroke-linejoin="round" dominant-baseline="central"><textPath href="#p3" textLength="118" lengthAdjust="spacingAndGlyphs">Green Lake Way N</textPath></text>
<text x="759" y="617" font-size="23" fill="#4a72c8" font-weight="400" font-family="Liberation Sans" textLength="213" lengthAdjust="spacingAndGlyphs" paint-order="stroke" stroke="#fff" stroke-width="4" stroke-linejoin="round" >Hugo's Barbershop</text>
<text x="676" y="998" font-size="23" fill="#4a72c8" font-weight="400" font-family="Liberation Sans" textLength="229" lengthAdjust="spacingAndGlyphs" paint-order="stroke" stroke="#fff" stroke-width="4" stroke-linejoin="round" >Whole Foods Market</text>
<text x="174" y="946" font-size="23" fill="#4a72c8" font-weight="400" font-family="Liberation Sans" textLength="84" lengthAdjust="spacingAndGlyphs" paint-order="stroke" stroke="#fff" stroke-width="4" stroke-linejoin="round" >Bongos</text>
<text x="704" y="1433" font-size="23" fill="#4a72c8" font-weight="400" font-family="Liberation Sans" textLength="154" lengthAdjust="spacingAndGlyphs" paint-order="stroke" stroke="#fff" stroke-width="4" stroke-linejoin="round" >Dick's Drive-In</text>
<text x="24" y="1453" font-size="23" fill="#4a72c8" font-weight="400" font-family="Liberation Sans" textLength="142" lengthAdjust="spacingAndGlyphs" paint-order="stroke" stroke="#fff" stroke-width="4" stroke-linejoin="round" >use Roasters</text>
<text x="24" y="1205.5" font-size="24" fill="#2f8a6c" font-weight="400" font-family="Liberation Sans" textLength="148" lengthAdjust="spacingAndGlyphs" paint-order="stroke" stroke="#fff" stroke-width="4" stroke-linejoin="round" >and Park Zoo</text>
<text x="282" y="1222" font-size="24" fill="#3b8a43" font-weight="400" font-family="Liberation Sans" textLength="113" lengthAdjust="spacingAndGlyphs" paint-order="stroke" stroke="#fff" stroke-width="4" stroke-linejoin="round" >Woodland</text>
<text x="314" y="1246" font-size="24" fill="#3b8a43" font-weight="400" font-family="Liberation Sans" textLength="51" lengthAdjust="spacingAndGlyphs" paint-order="stroke" stroke="#fff" stroke-width="4" stroke-linejoin="round" >Park</text>
<text x="172" y="1331" font-size="24" fill="#3b8a43" font-weight="400" font-family="Liberation Sans" textLength="112" lengthAdjust="spacingAndGlyphs" paint-order="stroke" stroke="#fff" stroke-width="4" stroke-linejoin="round" >Woodland</text>
<text x="172" y="1356" font-size="24" fill="#3b8a43" font-weight="400" font-family="Liberation Sans" textLength="112" lengthAdjust="spacingAndGlyphs" paint-order="stroke" stroke="#fff" stroke-width="4" stroke-linejoin="round" >Park Rose</text>
<text x="190" y="1381" font-size="24" fill="#3b8a43" font-weight="400" font-family="Liberation Sans" textLength="77" lengthAdjust="spacingAndGlyphs" paint-order="stroke" stroke="#fff" stroke-width="4" stroke-linejoin="round" >Garden</text>
<path d="M450.0,693.0 C448.9,694.0 441.9,699.5 440.5,702.0 C439.1,704.5 439.5,709.1 438.0,714.0 C436.5,718.9 430.3,737.9 428.0,744.0 C425.7,750.1 422.6,760.2 418.0,766.0 C413.4,771.8 397.6,788.6 389.0,794.0 C380.4,799.4 350.5,809.0 344.0,812.0 C337.5,815.0 336.1,815.6 333.0,820.0 C329.9,824.4 319.3,842.2 317.0,850.0 C314.7,857.8 313.9,879.8 313.0,887.0 C312.1,894.2 311.6,903.4 309.5,912.0 C307.4,920.6 297.9,950.7 295.0,961.0 C292.1,971.3 286.3,995.1 285.0,1000.0 C283.7,1004.9 282.1,999.4 284.0,1003.0 C285.9,1006.6 295.8,1024.2 301.0,1031.0 C306.2,1037.8 326.4,1057.2 329.0,1061.0 C331.6,1064.8 322.5,1061.5 323.0,1064.0 C323.5,1066.5 331.1,1079.7 333.0,1082.0 C334.9,1084.3 337.4,1079.3 339.0,1084.0 C340.6,1088.7 344.6,1114.7 347.0,1122.0 C349.4,1129.3 355.7,1142.3 360.0,1147.0 C364.3,1151.7 378.4,1159.5 384.0,1162.0 C389.6,1164.5 403.3,1165.8 408.0,1168.0 C412.7,1170.2 422.0,1181.3 424.0,1181.0 C426.0,1180.7 424.8,1169.9 425.0,1165.0 C425.2,1160.1 424.2,1144.5 426.0,1139.0 C427.8,1133.5 435.2,1122.1 440.0,1118.0 C444.8,1113.9 459.2,1109.5 467.0,1104.0 C474.8,1098.5 498.8,1080.2 507.0,1071.0 C515.2,1061.8 529.3,1034.7 537.0,1025.0 C544.7,1015.3 567.9,993.8 573.0,988.0 C578.1,982.2 579.6,979.4 581.0,975.0 C582.4,970.6 584.0,955.6 585.0,950.0 C586.0,944.4 588.2,931.2 590.0,927.0 C591.8,922.8 596.5,916.2 600.0,914.0 C603.5,911.8 611.8,908.6 620.0,908.0 C628.2,907.4 660.1,909.7 670.0,909.0 C679.9,908.3 699.2,904.6 705.0,902.0 C710.8,899.4 718.0,891.7 720.0,887.0 C722.0,882.3 722.6,867.7 722.0,862.0 C721.4,856.3 721.6,846.6 715.0,838.0 C708.4,829.4 674.2,795.0 665.0,788.0 C655.8,781.0 645.2,779.3 636.0,778.0 C626.8,776.7 595.0,778.8 586.0,777.0 C577.0,775.2 565.3,768.6 559.0,763.0 C552.7,757.4 536.6,735.2 532.0,729.0 C527.4,722.8 521.0,712.2 519.5,710.0" fill="none" stroke="#7e9ce0" stroke-width="6" stroke-linejoin="round" stroke-linecap="round"/>
<path d="M30,484 L16.08,461.68 A16.4,16.4 0 1 1 43.92,461.68 Z" fill="#7190d6" stroke="#fff" stroke-width="2"/>
<path d="M20,446 h20 l-3,12 h-14 M24,462 a2,2 0 1 0 0.1,0 M34,462 a2,2 0 1 0 0.1,0" fill="none" stroke="#fff" stroke-width="2.5"/>
<path d="M281,959 L267.08,936.68 A16.4,16.4 0 1 1 294.92,936.68 Z" fill="#7190d6" stroke="#fff" stroke-width="2"/>
<g fill="#fff"><path d="M274,917 h1.6 v7 h1.3 v-7 h1.6 v7 h1.3 v-7 h1.6 v9 c0,1.5 -1,2.3 -2.2,2.5 v10 h-2.2 v-10 c-1.2,-0.2 -2.2,-1 -2.2,-2.5 z"/><path d="M286,917 c-2.5,1 -3.5,5 -3.5,9 h1.5 v12 h2 z"/></g>
<path d="M930,1010 L916.08,987.68 A16.4,16.4 0 1 1 943.92,987.68 Z" fill="#7190d6" stroke="#fff" stroke-width="2"/>
<path d="M919,969 h3 l3,13 h12 l2,-9 h-15 M926,987 a1.8,1.8 0 1 0 0.1,0 M935,987 a1.8,1.8 0 1 0 0.1,0" fill="none" stroke="#fff" stroke-width="2.4"/>
<path d="M680,1445 L666.08,1422.68 A16.4,16.4 0 1 1 693.92,1422.68 Z" fill="#7190d6" stroke="#fff" stroke-width="2"/>
<g fill="#fff"><path d="M673,1403 h1.6 v7 h1.3 v-7 h1.6 v7 h1.3 v-7 h1.6 v9 c0,1.5 -1,2.3 -2.2,2.5 v10 h-2.2 v-10 c-1.2,-0.2 -2.2,-1 -2.2,-2.5 z"/><path d="M685,1403 c-2.5,1 -3.5,5 -3.5,9 h1.5 v12 h2 z"/></g>
<path d="M196,1220 L181.43,1195.76 A17,17 0 1 1 210.57,1195.76 Z" fill="#5ec3a6" stroke="#fff" stroke-width="2"/>
<g fill="#fff"><ellipse cx="196" cy="1193" rx="6" ry="5"/><circle cx="189" cy="1184" r="2.6"/><circle cx="194" cy="1179" r="2.6"/><circle cx="199" cy="1179" r="2.6"/><circle cx="204" cy="1184" r="2.6"/></g>
<path d="M228,1303 L213.43,1278.76 A17,17 0 1 1 242.57,1278.76 Z" fill="#6b9e5e" stroke="#fff" stroke-width="2"/>
<g fill="#fff"><circle cx="228" cy="1262" r="3.5"/><circle cx="236" cy="1268" r="3.5"/><circle cx="233" cy="1277" r="3.5"/><circle cx="223" cy="1277" r="3.5"/><circle cx="220" cy="1268" r="3.5"/></g>
<g transform="translate(631,456) scale(1.000,1.000)"><path d="M1,4 C4,2 6,5 8.5,2 C10.5,4.5 14.5,4.5 16.5,2 C19,5 21,2 24,4 V7 H1 Z" fill="#c8555a" stroke="#fff" stroke-width="1"/><path d="M1,7 H24 V15 C24,21 18,25 12.5,28 C7,25 1,21 1,15 Z" fill="#4a77c4" stroke="#fff" stroke-width="1"/><text x="12.5" y="20" font-size="13" font-weight="700" fill="#fff" text-anchor="middle" font-family="Liberation Sans">5</text></g>
<g transform="translate(810,912) scale(1.000,1.000)"><path d="M1,4 C4,2 6,5 8.5,2 C10.5,4.5 14.5,4.5 16.5,2 C19,5 21,2 24,4 V7 H1 Z" fill="#c8555a" stroke="#fff" stroke-width="1"/><path d="M1,7 H24 V15 C24,21 18,25 12.5,28 C7,25 1,21 1,15 Z" fill="#4a77c4" stroke="#fff" stroke-width="1"/><text x="12.5" y="20" font-size="13" font-weight="700" fill="#fff" text-anchor="middle" font-family="Liberation Sans">5</text></g>
<g transform="translate(782,1222) scale(1.000,1.000)"><path d="M1,4 C4,2 6,5 8.5,2 C10.5,4.5 14.5,4.5 16.5,2 C19,5 21,2 24,4 V7 H1 Z" fill="#c8555a" stroke="#fff" stroke-width="1"/><path d="M1,7 H24 V15 C24,21 18,25 12.5,28 C7,25 1,21 1,15 Z" fill="#4a77c4" stroke="#fff" stroke-width="1"/><text x="12.5" y="20" font-size="13" font-weight="700" fill="#fff" text-anchor="middle" font-family="Liberation Sans">5</text></g>
<g transform="translate(795,1260) scale(1.000,1.000)"><path d="M1,4 C4,2 6,5 8.5,2 C10.5,4.5 14.5,4.5 16.5,2 C19,5 21,2 24,4 V7 H1 Z" fill="#c8555a" stroke="#fff" stroke-width="1"/><path d="M1,7 H24 V15 C24,21 18,25 12.5,28 C7,25 1,21 1,15 Z" fill="#4a77c4" stroke="#fff" stroke-width="1"/><text x="12.5" y="20" font-size="13" font-weight="700" fill="#fff" text-anchor="middle" font-family="Liberation Sans">5</text></g>
<rect x="258" y="1110" width="29" height="24" rx="11" fill="#fff" stroke="#5f6368" stroke-width="2"/>
<text x="272.5" y="1128.5" font-size="17" fill="#333" text-anchor="middle" font-family="Liberation Sans">99</text>
<path d="M450,691 L434.39,678.53 A25,25 0 1 1 465.61,678.53 Z" fill="#9e1c12" />
<g transform="translate(438.5,646)"><path d="M2,1 V24" stroke="#fff" stroke-width="3" stroke-linecap="round"/><path d="M3,3 C8,0 12,5 17,3 C19.5,2 21.5,2 24,2.5 V16.5 C21.5,16 19,16.5 17,17.5 C12,19.5 8,15 3,17 Z" fill="#fff"/><path d="M5.5,5.2 h3 v3 h-3z M11.5,5.8 h3 v3 h-3z M17.5,4.8 h3 v3 h-3z M8.5,8.5 h3 v3 h-3z M14.5,8.6 h3 v3 h-3z M20.5,8.3 h3 v3 h-3z M5.5,11.8 h3 v3 h-3z M11.5,12.2 h3 v3 h-3z M17.5,11.8 h3 v3 h-3z" fill="#9e1c12"/></g>
<path d="M520,709 L504.39,696.53 A25,25 0 1 1 535.61,696.53 Z" fill="#2c6518" />
<g fill="none" stroke="#fff" stroke-width="2.6"><circle cx="520" cy="679" r="9.5"/><path d="M520,663 v6 M516,663 h8 M520,673 v6 M527,668 l2,-2" stroke-linecap="round"/></g>
<circle cx="360" cy="1147" r="25.5" fill="#1b3fb8" stroke="#fff" stroke-width="1.2"/>
<text x="360" y="1155" font-size="22" font-weight="400" fill="#fff" stroke="#fff" stroke-width="0.25" text-anchor="middle" font-family="Liberation Sans">WK</text>
<circle cx="426" cy="1139" r="25.5" fill="#1b3fb8" stroke="#fff" stroke-width="1.2"/>
<text x="426" y="1147" font-size="22" font-weight="400" fill="#fff" stroke="#fff" stroke-width="0.25" text-anchor="middle" font-family="Liberation Sans">CL</text>
<defs><filter id="sh" x="-20%" y="-20%" width="140%" height="140%"><feDropShadow dx="0" dy="1.5" stdDeviation="2" flood-color="#000" flood-opacity="0.25"/></filter></defs>
<rect x="889" y="429" width="72" height="72" rx="4" fill="#fff" filter="url(#sh)"/>
<path d="M911,458.5 V451.5 H920.5 M929.5,451.5 H939 V458.5 M939,471.5 V478.5 H929.5 M920.5,478.5 H911 V471.5" fill="none" stroke="#666" stroke-width="2.8" stroke-linecap="butt"/>
<rect x="889" y="1276" width="72" height="145" rx="4" fill="#fff" filter="url(#sh)"/>
<rect x="898" y="1348" width="54" height="1.5" fill="#e6e6e6"/>
<path d="M909,1312.3 H940.6 M924.8,1296 V1328.5" stroke="#666" stroke-width="6.6"/>
<path d="M909,1385.7 H940.6" stroke="#666" stroke-width="7"/>
<rect x="342" y="1440" width="637" height="25" fill="#f5f5f5" fill-opacity="0.82"/>
<text x="351" y="1459.7" font-size="17.5" fill="#111" font-family="Liberation Sans" textLength="155" lengthAdjust="spacingAndGlyphs">Keyboard shortcuts</text>
<text x="528" y="1459.7" font-size="17.5" fill="#111" font-family="Liberation Sans" textLength="196" lengthAdjust="spacingAndGlyphs">Map data ©2024 Google</text>
<text x="747" y="1459.7" font-size="17.5" fill="#111" font-family="Liberation Sans" textLength="49" lengthAdjust="spacingAndGlyphs">Terms</text>
<text x="818" y="1459.7" font-size="17.5" fill="#111" font-family="Liberation Sans" textLength="150" lengthAdjust="spacingAndGlyphs">Report a map error</text>
<text x="42" y="1451" font-size="30" font-weight="400" fill="#fff" stroke="#a0a0a0" stroke-width="4.2" stroke-linejoin="round" paint-order="stroke" font-family="Liberation Sans" textLength="101" lengthAdjust="spacingAndGlyphs">Google</text>
<text x="42" y="1451" font-size="30" font-weight="400" fill="#fff" stroke="#fff" stroke-width="1" font-family="Liberation Sans" textLength="101" lengthAdjust="spacingAndGlyphs">Google</text>
<circle cx="125" cy="1478" r="16" fill="#7190d6"/></svg>
</div>

<!-- Cards -->
<div class="a" style="left:1033px;top:411px;width:953px;height:289px;border:1.3px solid #d9d9de;border-radius:20px;overflow:hidden">
  <div class="a" style="left:0;top:175.5px;width:953px;height:114px;background:#f9f9fc;border-top:1.3px solid #d9d9de"></div>
</div>
<div class="a" style="left:1033px;top:731px;width:953px;height:289px;border:1.3px solid #d9d9de;border-radius:20px;overflow:hidden">
  <div class="a" style="left:0;top:175.5px;width:953px;height:114px;background:#f9f9fc;border-top:1.3px solid #d9d9de"></div>
</div>

<div class="a" style="left:1079px;top:463px;width:72px;height:72px;border-radius:50%;background:#1b3fb8"></div>
<div class="a" style="left:1079px;top:481.5px;width:72px;text-align:center;font-size:36px;color:#fff">WK</div>
<div class="a blue" style="left:1174px;top:457.6px;font-size:30px;text-decoration:underline;text-decoration-thickness:2px;text-underline-offset:3px">Welch Kittle</div>
<div class="a" style="left:1174px;top:504px;width:177px;height:40px;border-radius:20px;background:#e2f6d3"></div>
<svg class="i" style="left:1189px;top:511px" width="19" height="23" viewBox="0 0 19 23"><path d="M6 0 H13 V2.5 H11 V4.6 C15.5 5.4,19 9.3,19 14 C19 19,14.7 23,9.5 23 C4.3 23,0 19,0 14 C0 9.3,3.5 5.4,8 4.6 V2.5 H6 Z M8.3 9 V15 H10.7 V9 Z" fill="#173e0b" fill-rule="evenodd"/><path d="M15.5 4 L18 6.5" stroke="#173e0b" stroke-width="2.4" stroke-linecap="round"/></svg>
<div class="a b" style="letter-spacing:0.9px;-webkit-text-stroke:0.7px currentColor;left:1216px;top:512.4px;font-size:22px;color:#173e0b">In progress</div>
<div class="a" style="left:1483px;top:460px;font-size:26px;letter-spacing:0.25px;color:#45464f">Predicted finish:</div>
<div class="a b" style="left:1687px;top:460px;font-size:26px;color:#45464f">19:04</div>
<div class="a" style="left:1773px;top:462px;width:2px;height:26px;background:#45464f"></div>
<div class="a b" style="left:1794px;top:460px;font-size:26px;letter-spacing:-0.7px;color:#45464f">8:51 PM EDT</div>
<svg class="i" style="left:1085px;top:635px" width="19" height="18" viewBox="0 0 19 18"><path d="M2 2 L17 16 M17 2 L2 16" stroke="#1c1c22" stroke-width="3.6" stroke-linecap="round"/></svg>
<div class="a" style="left:1112px;top:629.3px;font-size:30px;letter-spacing:0.4px;color:#1c1c22">Unfollow</div>
<svg class="i" style="left:1835px;top:632px" width="33" height="25" viewBox="0 0 33 25"><path d="M0 4.5 L8.5 0.5 V21 L0 25 Z M11 0.5 L21 4 V25 L11 21 Z M23.5 4 L32.5 0.5 V20.5 L23.5 24.5 Z" fill="#1b3fb8"/></svg>
<div class="a blue" style="left:1873px;top:629.4px;font-size:30px">View</div>

<div class="a" style="left:1079px;top:783px;width:72px;height:72px;border-radius:50%;background:#1b3fb8"></div>
<div class="a" style="left:1079px;top:801.5px;width:72px;text-align:center;font-size:36px;color:#fff">CL</div>
<div class="a blue" style="left:1174px;top:777.6px;font-size:30px;text-decoration:underline;text-decoration-thickness:2px;text-underline-offset:3px">Chiquia Land</div>
<div class="a" style="left:1174px;top:824px;width:177px;height:40px;border-radius:20px;background:#e2f6d3"></div>
<svg class="i" style="left:1189px;top:831px" width="19" height="23" viewBox="0 0 19 23"><path d="M6 0 H13 V2.5 H11 V4.6 C15.5 5.4,19 9.3,19 14 C19 19,14.7 23,9.5 23 C4.3 23,0 19,0 14 C0 9.3,3.5 5.4,8 4.6 V2.5 H6 Z M8.3 9 V15 H10.7 V9 Z" fill="#173e0b" fill-rule="evenodd"/><path d="M15.5 4 L18 6.5" stroke="#173e0b" stroke-width="2.4" stroke-linecap="round"/></svg>
<div class="a b" style="letter-spacing:0.9px;-webkit-text-stroke:0.7px currentColor;left:1216px;top:832.4px;font-size:22px;color:#173e0b">In progress</div>
<div class="a" style="left:1483px;top:780px;font-size:26px;letter-spacing:0.25px;color:#45464f">Predicted finish:</div>
<div class="a b" style="left:1687px;top:780px;font-size:26px;color:#45464f">22:11</div>
<div class="a" style="left:1773px;top:782px;width:2px;height:26px;background:#45464f"></div>
<div class="a b" style="left:1794px;top:780px;font-size:26px;letter-spacing:-0.7px;color:#45464f">8:54 PM EDT</div>
<svg class="i" style="left:1085px;top:955px" width="19" height="18" viewBox="0 0 19 18"><path d="M2 2 L17 16 M17 2 L2 16" stroke="#1c1c22" stroke-width="3.6" stroke-linecap="round"/></svg>
<div class="a" style="left:1112px;top:949.3px;font-size:30px;letter-spacing:0.4px;color:#1c1c22">Unfollow</div>
<svg class="i" style="left:1835px;top:952px" width="33" height="25" viewBox="0 0 33 25"><path d="M0 4.5 L8.5 0.5 V21 L0 25 Z M11 0.5 L21 4 V25 L11 21 Z M23.5 4 L32.5 0.5 V20.5 L23.5 24.5 Z" fill="#1b3fb8"/></svg>
<div class="a blue" style="left:1873px;top:949.4px;font-size:30px">View</div>


<!-- Share -->
<div class="a" style="left:1662px;top:1508px;width:323.5px;height:68.5px;border:1.3px solid #c6c6ca;border-radius:12px"></div>
<svg class="i" style="left:1690px;top:1530px" width="26" height="26" viewBox="0 0 26 26"><circle cx="20.5" cy="5" r="5" fill="#1b3fb8"/><circle cx="20.5" cy="21" r="5" fill="#1b3fb8"/><circle cx="5" cy="13" r="5" fill="#1b3fb8"/><path d="M5 13 L20.5 5 M5 13 L20.5 21" stroke="#1b3fb8" stroke-width="3.2"/></svg>
<div class="a blue" style="left:1729px;top:1529px;font-size:30px;letter-spacing:-0.2px">Share this page</div>
<svg class="i" style="left:1945px;top:1539px" width="15" height="9" viewBox="0 0 15 9"><path d="M0 0 H15 L7.5 8.5 Z" fill="#1b3fb8"/></svg>

</body></html>
